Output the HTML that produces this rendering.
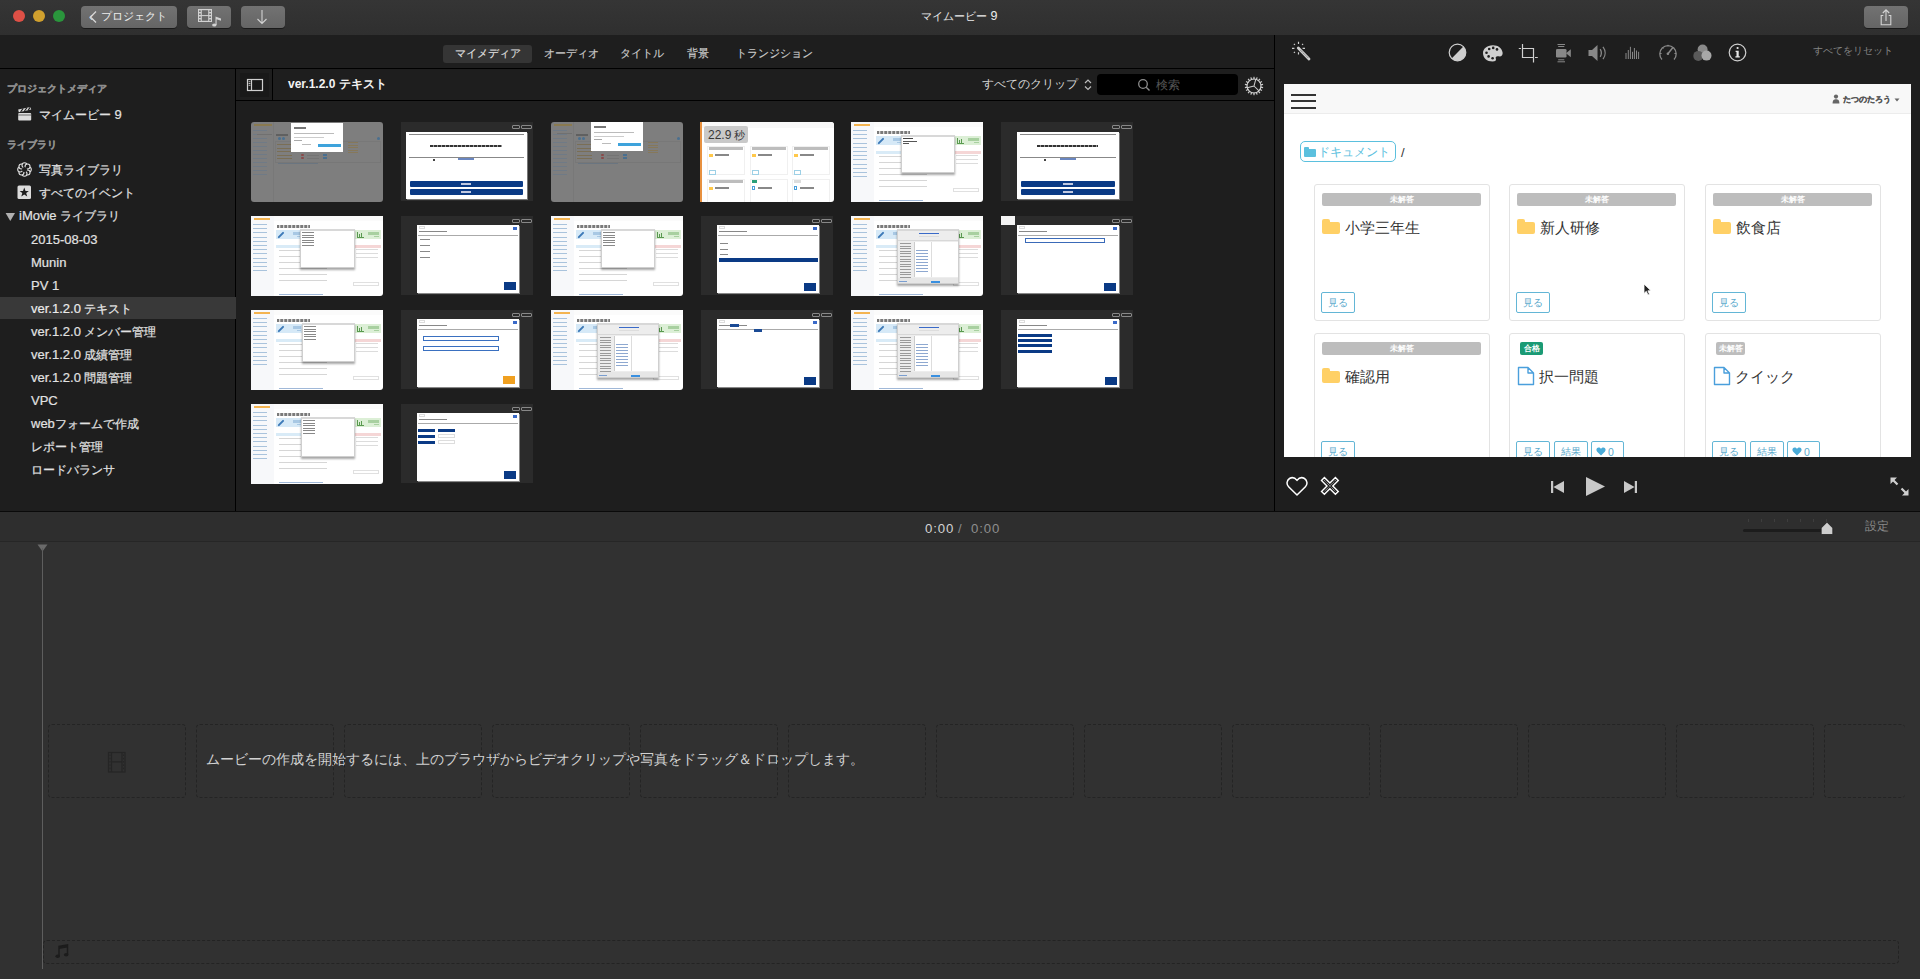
<!DOCTYPE html>
<html><head><meta charset="utf-8">
<style>
*{box-sizing:border-box;margin:0;padding:0}
html,body{width:1920px;height:979px;overflow:hidden;background:#1e1e1e;font-family:"Liberation Sans",sans-serif;}
.a{position:absolute}
.t{position:absolute;white-space:nowrap;line-height:1}
#titlebar{left:0;top:0;width:1920px;height:35px;background:linear-gradient(#353535,#2f2f2f)}
.tl{width:12px;height:12px;border-radius:50%;top:10px}
.btn{top:6px;height:22px;border-radius:4px;background:linear-gradient(#727272,#656565);box-shadow:0 1px 0 #1a1a1a}
.side{font-size:13px;color:#e2e2e2;-webkit-text-stroke:0.2px #e2e2e2}
.j{font-size:11.7px}
.tab{font-size:11px;color:#cbcbcb;top:48px;-webkit-text-stroke:0.15px #cbcbcb}
.thumb{width:132px;height:80px;overflow:hidden}
.card{background:#fff;border:1px solid #e4e4e4;border-radius:3px;width:176px}
.badge{background:#bbb;color:#fff;font-size:8px;font-weight:bold;text-align:center;line-height:13px;height:13px;border-radius:2px}
.vbtn{border:1px solid #5fb4d2;border-radius:2px;color:#5aa9cc;font-size:9px;text-align:center;line-height:20px;height:21px;background:#fff}
.dbox{border:1px dashed #434343;border-radius:3px;width:138px;height:74px;top:724px}
</style></head><body>
<!-- title bar -->
<div id="titlebar" class="a"></div>
<div class="a tl" style="left:13px;background:#de5046"></div>
<div class="a tl" style="left:33px;background:#d0a02e"></div>
<div class="a tl" style="left:53px;background:#2a953c"></div>
<div class="a btn" style="left:81px;width:96px"></div>
<div class="t" style="left:89px;top:10px;font-size:13px;color:#e6e6e6">&#x2039;</div>
<div class="t" style="left:101px;top:11px;font-size:11px;color:#ececec">プロジェクト</div>
<div class="a btn" style="left:187px;width:44px"></div>
<div class="a btn" style="left:241px;width:44px"></div>
<div class="t" style="left:921px;top:10px;font-size:11.2px;color:#ececec">マイムービー<span style="font-size:12.5px"> 9</span></div>
<div class="a btn" style="left:1864px;width:44px"></div>

<!-- tab row -->
<div class="a" style="left:443px;top:45px;width:89px;height:18px;border-radius:3px;background:#353535"></div>
<div class="t tab" style="left:455px;color:#e8e8e8">マイメディア</div>
<div class="t tab" style="left:544px">オーディオ</div>
<div class="t tab" style="left:620px">タイトル</div>
<div class="t tab" style="left:687px">背景</div>
<div class="t tab" style="left:736px">トランジション</div>
<div class="a" style="left:0;top:68px;width:1274px;height:1px;background:#000"></div>

<!-- sidebar -->
<div class="a" style="left:235px;top:69px;width:1px;height:442px;background:#000"></div>
<div class="t" style="left:7px;top:84px;font-size:10px;font-weight:bold;color:#8d8d8d;-webkit-text-stroke:0.3px #8d8d8d">プロジェクトメディア</div>
<div class="t side" style="left:39px;top:108px"><span class="j">マイムービー</span> 9</div>
<div class="t" style="left:7px;top:140px;font-size:10px;font-weight:bold;color:#8d8d8d;-webkit-text-stroke:0.3px #8d8d8d">ライブラリ</div>
<div class="t side" style="left:39px;top:163px"><span class="j">写真ライブラリ</span></div>
<div class="t side" style="left:39px;top:186px"><span class="j">すべてのイベント</span></div>
<div class="t side" style="left:19px;top:209px">iMovie <span class="j">ライブラリ</span></div>
<div class="a" style="left:0;top:297px;width:236px;height:22px;background:#393939"></div>
<div class="t side" style="left:31px;top:233px">2015-08-03</div>
<div class="t side" style="left:31px;top:256px">Munin</div>
<div class="t side" style="left:31px;top:279px">PV 1</div>
<div class="t side" style="left:31px;top:302px;color:#f0f0f0">ver.1.2.0 <span class="j">テキスト</span></div>
<div class="t side" style="left:31px;top:325px">ver.1.2.0 <span class="j">メンバー管理</span></div>
<div class="t side" style="left:31px;top:348px">ver.1.2.0 <span class="j">成績管理</span></div>
<div class="t side" style="left:31px;top:371px">ver.1.2.0 <span class="j">問題管理</span></div>
<div class="t side" style="left:31px;top:394px">VPC</div>
<div class="t side" style="left:31px;top:417px">web<span class="j">フォームで作成</span></div>
<div class="t side" style="left:31px;top:440px"><span class="j">レポート管理</span></div>
<div class="t side" style="left:31px;top:463px"><span class="j">ロードバランサ</span></div>

<!-- browser header -->
<div class="a" style="left:240px;top:73px;width:29px;height:24px;background:#191919"></div>
<div class="a" style="left:272px;top:69px;width:1px;height:31px;background:#000"></div>
<div class="a" style="left:236px;top:100px;width:1038px;height:1px;background:#000"></div>
<div class="t" style="left:288px;top:78px;font-size:12px;font-weight:bold;color:#f2f2f2">ver.1.2.0 テキスト</div>
<div class="t" style="left:982px;top:79px;font-size:11.8px;color:#d6d6d6">すべてのクリップ</div>
<div class="t" style="left:1813px;top:46px;font-size:10px;color:#858585">すべてをリセット</div>
<div class="a" style="left:1097px;top:74px;width:141px;height:21px;border-radius:4px;background:#000"></div>
<div class="t" style="left:1156px;top:79px;font-size:12px;color:#555">検索</div>
<div class="a" style="left:1274px;top:35px;width:1px;height:476px;background:#000"></div>

<!-- thumbs -->
<div class="a" style="left:251px;top:122px;width:132px;height:80px;background:#7e7e7e;border-radius:3px"></div><div class="a" style="left:273px;top:122px;width:1px;height:80px;background:#787878;"></div><div class="a" style="left:254px;top:124px;width:18px;height:2px;background:#8a7a50;"></div><div class="a" style="left:253px;top:130px;width:14px;height:1px;background:#6f7a86;"></div><div class="a" style="left:253px;top:134px;width:14px;height:1px;background:#6f7a86;"></div><div class="a" style="left:253px;top:138px;width:14px;height:1px;background:#6f7a86;"></div><div class="a" style="left:253px;top:142px;width:14px;height:1px;background:#6f7a86;"></div><div class="a" style="left:253px;top:146px;width:14px;height:1px;background:#6f7a86;"></div><div class="a" style="left:253px;top:150px;width:14px;height:1px;background:#6f7a86;"></div><div class="a" style="left:253px;top:154px;width:14px;height:1px;background:#6f7a86;"></div><div class="a" style="left:253px;top:158px;width:14px;height:1px;background:#6f7a86;"></div><div class="a" style="left:253px;top:162px;width:14px;height:1px;background:#6f7a86;"></div><div class="a" style="left:253px;top:166px;width:14px;height:1px;background:#6f7a86;"></div><div class="a" style="left:253px;top:170px;width:14px;height:1px;background:#6f7a86;"></div><div class="a" style="left:253px;top:174px;width:14px;height:1px;background:#6f7a86;"></div><div class="a" style="left:257px;top:134px;width:15px;height:1px;background:#707070;"></div><div class="a" style="left:276px;top:134px;width:12px;height:2px;background:#606060;"></div><div class="a" style="left:277px;top:144.0px;width:15px;height:1px;background:#7a6e55;"></div><div class="a" style="left:277px;top:147.5px;width:15px;height:1px;background:#7a6e55;"></div><div class="a" style="left:277px;top:151.0px;width:15px;height:1px;background:#7a6e55;"></div><div class="a" style="left:277px;top:154.5px;width:15px;height:1px;background:#7a6e55;"></div><div class="a" style="left:277px;top:158.0px;width:15px;height:1px;background:#7a6e55;"></div><div class="a" style="left:275px;top:141px;width:106px;height:22px;background:transparent;border:1px solid #787878"></div><div class="a" style="left:301px;top:154px;width:3px;height:2px;background:#8a4a4a;border-radius:1px"></div><div class="a" style="left:301px;top:157px;width:3px;height:2px;background:#8a4a4a;border-radius:1px"></div><div class="a" style="left:323px;top:154px;width:4px;height:2px;background:#4a7090;"></div><div class="a" style="left:323px;top:157px;width:4px;height:2px;background:#4a7090;"></div><div class="a" style="left:278px;top:137px;width:3px;height:3px;background:#4a7090;border-radius:50%"></div><div class="a" style="left:282px;top:137px;width:3px;height:3px;background:#4a7090;border-radius:50%"></div><div class="a" style="left:377px;top:137px;width:3px;height:3px;background:#4a7090;border-radius:50%"></div><div class="a" style="left:275px;top:162px;width:106px;height:1px;background:#777;"></div><div class="a" style="left:307px;top:155px;width:12px;height:1px;background:#747474;"></div><div class="a" style="left:307px;top:158px;width:12px;height:1px;background:#747474;"></div><div class="a" style="left:348px;top:142.0px;width:10px;height:1px;background:#86785a;"></div><div class="a" style="left:348px;top:144.5px;width:10px;height:1px;background:#86785a;"></div><div class="a" style="left:348px;top:147.0px;width:10px;height:1px;background:#86785a;"></div><div class="a" style="left:348px;top:149.5px;width:10px;height:1px;background:#86785a;"></div><div class="a" style="left:348px;top:152.0px;width:10px;height:1px;background:#86785a;"></div><div class="a" style="left:278px;top:163px;width:40px;height:1px;background:#6a7580;"></div><div class="a" style="left:291px;top:123px;width:52px;height:29px;background:#ffffff;"></div><div class="a" style="left:294px;top:127px;width:12px;height:2px;background:#777;"></div><div class="a" style="left:294px;top:133px;width:40px;height:1px;background:#bbb;"></div><div class="a" style="left:294px;top:137px;width:30px;height:1px;background:#ccc;"></div><div class="a" style="left:294px;top:140px;width:8px;height:1px;background:#aaa;"></div><div class="a" style="left:318px;top:144px;width:23px;height:3px;background:#3ea3dc;"></div><div class="a" style="left:302px;top:144px;width:9px;height:1px;background:#bbb;"></div>
<div class="a" style="left:401px;top:122px;width:132px;height:79px;background:#2b2b2b;"></div><div class="a" style="left:512px;top:125px;width:8px;height:4px;background:#2b2b2b;border:1px solid #888;border-radius:1px"></div><div class="a" style="left:521px;top:125px;width:11px;height:4px;background:#2b2b2b;border:1px solid #888;border-radius:1px"></div><div class="a" style="left:406px;top:132px;width:121px;height:67px;background:#fff;box-shadow:1px 1px 0 #777"></div><div class="a" style="left:409px;top:134px;width:115px;height:1px;background:#888;"></div><div class="a" style="left:430px;top:145px;width:72px;height:2px;background:#555;background:repeating-linear-gradient(90deg,#333 0 3px,#999 3px 4px)"></div><div class="a" style="left:409px;top:157px;width:115px;height:1px;background:#888;"></div><div class="a" style="left:458px;top:158px;width:16px;height:2px;background:#6a86c0;"></div><div class="a" style="left:433px;top:159px;width:2px;height:2px;background:#444;"></div><div class="a" style="left:410px;top:181px;width:113px;height:6px;background:#0a3a85;border-radius:1px"></div><div class="a" style="left:410px;top:189px;width:113px;height:6px;background:#0a3a85;border-radius:1px"></div><div class="a" style="left:461px;top:183px;width:10px;height:2px;background:#c0c8e0;"></div><div class="a" style="left:461px;top:191px;width:10px;height:2px;background:#c0c8e0;"></div>
<div class="a" style="left:551px;top:122px;width:132px;height:80px;background:#7e7e7e;border-radius:3px"></div><div class="a" style="left:573px;top:122px;width:1px;height:80px;background:#787878;"></div><div class="a" style="left:554px;top:124px;width:18px;height:2px;background:#8a7a50;"></div><div class="a" style="left:553px;top:130px;width:14px;height:1px;background:#6f7a86;"></div><div class="a" style="left:553px;top:134px;width:14px;height:1px;background:#6f7a86;"></div><div class="a" style="left:553px;top:138px;width:14px;height:1px;background:#6f7a86;"></div><div class="a" style="left:553px;top:142px;width:14px;height:1px;background:#6f7a86;"></div><div class="a" style="left:553px;top:146px;width:14px;height:1px;background:#6f7a86;"></div><div class="a" style="left:553px;top:150px;width:14px;height:1px;background:#6f7a86;"></div><div class="a" style="left:553px;top:154px;width:14px;height:1px;background:#6f7a86;"></div><div class="a" style="left:553px;top:158px;width:14px;height:1px;background:#6f7a86;"></div><div class="a" style="left:553px;top:162px;width:14px;height:1px;background:#6f7a86;"></div><div class="a" style="left:553px;top:166px;width:14px;height:1px;background:#6f7a86;"></div><div class="a" style="left:553px;top:170px;width:14px;height:1px;background:#6f7a86;"></div><div class="a" style="left:553px;top:174px;width:14px;height:1px;background:#6f7a86;"></div><div class="a" style="left:557px;top:133px;width:15px;height:1px;background:#707070;"></div><div class="a" style="left:576px;top:134px;width:12px;height:2px;background:#606060;"></div><div class="a" style="left:577px;top:144.0px;width:15px;height:1px;background:#7a6e55;"></div><div class="a" style="left:577px;top:147.5px;width:15px;height:1px;background:#7a6e55;"></div><div class="a" style="left:577px;top:151.0px;width:15px;height:1px;background:#7a6e55;"></div><div class="a" style="left:577px;top:154.5px;width:15px;height:1px;background:#7a6e55;"></div><div class="a" style="left:577px;top:158.0px;width:15px;height:1px;background:#7a6e55;"></div><div class="a" style="left:575px;top:141px;width:106px;height:22px;background:transparent;border:1px solid #787878"></div><div class="a" style="left:601px;top:154px;width:3px;height:2px;background:#8a4a4a;border-radius:1px"></div><div class="a" style="left:601px;top:157px;width:3px;height:2px;background:#8a4a4a;border-radius:1px"></div><div class="a" style="left:623px;top:154px;width:4px;height:2px;background:#4a7090;"></div><div class="a" style="left:623px;top:157px;width:4px;height:2px;background:#4a7090;"></div><div class="a" style="left:578px;top:137px;width:3px;height:3px;background:#4a7090;border-radius:50%"></div><div class="a" style="left:582px;top:137px;width:3px;height:3px;background:#4a7090;border-radius:50%"></div><div class="a" style="left:677px;top:137px;width:3px;height:3px;background:#4a7090;border-radius:50%"></div><div class="a" style="left:575px;top:162px;width:106px;height:1px;background:#777;"></div><div class="a" style="left:607px;top:155px;width:12px;height:1px;background:#747474;"></div><div class="a" style="left:607px;top:158px;width:12px;height:1px;background:#747474;"></div><div class="a" style="left:648px;top:142.0px;width:10px;height:1px;background:#86785a;"></div><div class="a" style="left:648px;top:144.5px;width:10px;height:1px;background:#86785a;"></div><div class="a" style="left:648px;top:147.0px;width:10px;height:1px;background:#86785a;"></div><div class="a" style="left:648px;top:149.5px;width:10px;height:1px;background:#86785a;"></div><div class="a" style="left:648px;top:152.0px;width:10px;height:1px;background:#86785a;"></div><div class="a" style="left:578px;top:163px;width:40px;height:1px;background:#6a7580;"></div><div class="a" style="left:591px;top:122px;width:52px;height:29px;background:#ffffff;"></div><div class="a" style="left:594px;top:126px;width:12px;height:2px;background:#777;"></div><div class="a" style="left:594px;top:132px;width:40px;height:1px;background:#bbb;"></div><div class="a" style="left:594px;top:136px;width:30px;height:1px;background:#ccc;"></div><div class="a" style="left:594px;top:139px;width:8px;height:1px;background:#aaa;"></div><div class="a" style="left:618px;top:143px;width:23px;height:3px;background:#3ea3dc;"></div><div class="a" style="left:602px;top:143px;width:9px;height:1px;background:#bbb;"></div>
<div class="a" style="left:700px;top:122px;width:134px;height:80px;overflow:hidden;border-radius:0 3px 3px 0"><div class="a" style="left:0px;top:0px;width:134px;height:80px;background:#fff;"></div><div class="a" style="left:0px;top:0px;width:2px;height:80px;background:#e8913f;"></div><div class="a" style="left:2px;top:0px;width:132px;height:6px;background:#f8f8f8;"></div><div class="a" style="left:4px;top:4px;width:44px;height:17px;background:#c9c9c9;border-radius:2px"></div><div class="t" style="left:8px;top:6.5px;font-size:12px;color:#383838">22.9<span style="font-size:10.5px"> 秒</span></div><div class="a" style="left:7px;top:24px;width:38px;height:29px;background:#fff;border:1px solid #f0f0f0"></div><div class="a" style="left:9px;top:25px;width:34px;height:3px;background:#bdbdbd;"></div><div class="a" style="left:9px;top:32px;width:4px;height:3px;background:#ffc84a;"></div><div class="a" style="left:15px;top:32px;width:14px;height:2px;background:#888;"></div><div class="a" style="left:9px;top:48px;width:7px;height:5px;background:#fff;border:1px solid #9dd0e6"></div><div class="a" style="left:50px;top:24px;width:38px;height:29px;background:#fff;border:1px solid #f0f0f0"></div><div class="a" style="left:52px;top:25px;width:34px;height:3px;background:#bdbdbd;"></div><div class="a" style="left:52px;top:32px;width:4px;height:3px;background:#ffc84a;"></div><div class="a" style="left:58px;top:32px;width:14px;height:2px;background:#888;"></div><div class="a" style="left:52px;top:48px;width:7px;height:5px;background:#fff;border:1px solid #9dd0e6"></div><div class="a" style="left:92px;top:24px;width:38px;height:29px;background:#fff;border:1px solid #f0f0f0"></div><div class="a" style="left:94px;top:25px;width:34px;height:3px;background:#bdbdbd;"></div><div class="a" style="left:94px;top:32px;width:4px;height:3px;background:#ffc84a;"></div><div class="a" style="left:100px;top:32px;width:14px;height:2px;background:#888;"></div><div class="a" style="left:94px;top:48px;width:7px;height:5px;background:#fff;border:1px solid #9dd0e6"></div><div class="a" style="left:7px;top:57px;width:38px;height:29px;background:#fff;border:1px solid #f0f0f0"></div><div class="a" style="left:9px;top:58px;width:34px;height:3px;background:#bdbdbd;"></div><div class="a" style="left:9px;top:65px;width:4px;height:3px;background:#ffc84a;"></div><div class="a" style="left:15px;top:65px;width:14px;height:2px;background:#888;"></div><div class="a" style="left:9px;top:81px;width:7px;height:5px;background:#fff;border:1px solid #9dd0e6"></div><div class="a" style="left:50px;top:57px;width:38px;height:29px;background:#fff;border:1px solid #f0f0f0"></div><div class="a" style="left:52px;top:58px;width:5px;height:3px;background:#2aa07a;"></div><div class="a" style="left:52px;top:64px;width:3px;height:4px;background:#fff;border:1px solid #4a9fdc"></div><div class="a" style="left:58px;top:65px;width:14px;height:2px;background:#888;"></div><div class="a" style="left:52px;top:81px;width:7px;height:5px;background:#fff;border:1px solid #9dd0e6"></div><div class="a" style="left:92px;top:57px;width:38px;height:29px;background:#fff;border:1px solid #f0f0f0"></div><div class="a" style="left:94px;top:58px;width:7px;height:3px;background:#ddd;"></div><div class="a" style="left:94px;top:64px;width:3px;height:4px;background:#fff;border:1px solid #4a9fdc"></div><div class="a" style="left:100px;top:65px;width:14px;height:2px;background:#888;"></div><div class="a" style="left:94px;top:81px;width:7px;height:5px;background:#fff;border:1px solid #9dd0e6"></div></div>
<div class="a" style="left:851px;top:122px;width:132px;height:80px;background:#fff;border-radius:3px"></div><div class="a" style="left:851px;top:122px;width:23px;height:80px;background:#f7f8fa;"></div><div class="a" style="left:874px;top:122px;width:109px;height:5px;background:#fbfbfb;"></div><div class="a" style="left:854px;top:124px;width:16px;height:2px;background:#f4b450;"></div><div class="a" style="left:853px;top:130.0px;width:14px;height:1px;background:#a9c3dc;"></div><div class="a" style="left:853px;top:134.2px;width:14px;height:1px;background:#a9c3dc;"></div><div class="a" style="left:853px;top:138.4px;width:14px;height:1px;background:#a9c3dc;"></div><div class="a" style="left:853px;top:142.6px;width:14px;height:1px;background:#a9c3dc;"></div><div class="a" style="left:853px;top:146.8px;width:14px;height:1px;background:#a9c3dc;"></div><div class="a" style="left:853px;top:151.0px;width:14px;height:1px;background:#a9c3dc;"></div><div class="a" style="left:853px;top:155.2px;width:14px;height:1px;background:#a9c3dc;"></div><div class="a" style="left:853px;top:159.4px;width:14px;height:1px;background:#a9c3dc;"></div><div class="a" style="left:853px;top:163.6px;width:14px;height:1px;background:#a9c3dc;"></div><div class="a" style="left:853px;top:167.8px;width:14px;height:1px;background:#a9c3dc;"></div><div class="a" style="left:853px;top:172.0px;width:14px;height:1px;background:#a9c3dc;"></div><div class="a" style="left:853px;top:176.2px;width:14px;height:1px;background:#a9c3dc;"></div><div class="a" style="left:877px;top:131px;width:33px;height:3px;background:#777;background:repeating-linear-gradient(90deg,#7a7a7a 0 2px,#d8d8d8 2px 3px,#999 3px 4px)"></div><div class="a" style="left:876px;top:136px;width:55px;height:9px;background:#d6e9f7;"></div><div class="a" style="left:877px;top:139.5px;width:8px;height:2.2px;background:#3d7ab8;transform:rotate(-45deg);border-radius:1px"></div><div class="a" style="left:893px;top:138px;width:8px;height:3px;background:#a8c8e4;"></div><div class="a" style="left:897px;top:142px;width:4px;height:1px;background:#a8c8e4;"></div><div class="a" style="left:955px;top:136px;width:26px;height:9px;background:#dcefd6;"></div><div class="a" style="left:957px;top:138px;width:1px;height:6px;background:#5a9a50;"></div><div class="a" style="left:959px;top:140px;width:1px;height:4px;background:#5a9a50;"></div><div class="a" style="left:961px;top:139px;width:1px;height:5px;background:#5a9a50;"></div><div class="a" style="left:957px;top:143px;width:7px;height:1px;background:#5a9a50;"></div><div class="a" style="left:968px;top:138px;width:11px;height:3px;background:#a8d0a0;"></div><div class="a" style="left:974px;top:142px;width:5px;height:1px;background:#a8d0a0;"></div><div class="a" style="left:876px;top:151px;width:55px;height:3px;background:#d9ebf7;"></div><div class="a" style="left:955px;top:151px;width:26px;height:3px;background:#f5d6d6;"></div><div class="a" style="left:879px;top:156px;width:48px;height:1px;background:#d6d6d6;"></div><div class="a" style="left:879px;top:162px;width:48px;height:1px;background:#d6d6d6;"></div><div class="a" style="left:879px;top:168px;width:48px;height:1px;background:#d6d6d6;"></div><div class="a" style="left:879px;top:174px;width:48px;height:1px;background:#d6d6d6;"></div><div class="a" style="left:879px;top:180px;width:48px;height:1px;background:#d6d6d6;"></div><div class="a" style="left:879px;top:186px;width:48px;height:1px;background:#d6d6d6;"></div><div class="a" style="left:956px;top:155px;width:22px;height:1px;background:#dcdcdc;"></div><div class="a" style="left:956px;top:159px;width:22px;height:1px;background:#dcdcdc;"></div><div class="a" style="left:956px;top:163px;width:22px;height:1px;background:#dcdcdc;"></div><div class="a" style="left:953px;top:188px;width:26px;height:4px;background:#fff;border:1px solid #e0e0e0"></div><div class="a" style="left:879px;top:200px;width:44px;height:1px;background:#a0b8d8;"></div><div class="a" style="left:901px;top:135px;width:54px;height:38px;background:#fff;border:1px solid #cfcfcf;border-top:2px solid #d8d8d8;box-shadow:0 2px 2px rgba(0,0,0,.35)"></div><div class="a" style="left:903px;top:138px;width:10px;height:1px;background:#444;"></div><div class="a" style="left:903px;top:141px;width:14px;height:1px;background:#555;"></div><div class="a" style="left:903px;top:143px;width:6px;height:1px;background:#555;"></div>
<div class="a" style="left:1001px;top:122px;width:132px;height:79px;background:#2b2b2b;"></div><div class="a" style="left:1112px;top:125px;width:8px;height:4px;background:#2b2b2b;border:1px solid #888;border-radius:1px"></div><div class="a" style="left:1121px;top:125px;width:11px;height:4px;background:#2b2b2b;border:1px solid #888;border-radius:1px"></div><div class="a" style="left:1017px;top:132px;width:102px;height:67px;background:#fff;box-shadow:1px 1px 0 #777"></div><div class="a" style="left:1020px;top:134px;width:96px;height:1px;background:#888;"></div><div class="a" style="left:1037px;top:145px;width:61px;height:2px;background:#555;background:repeating-linear-gradient(90deg,#333 0 3px,#999 3px 4px)"></div><div class="a" style="left:1020px;top:157px;width:96px;height:1px;background:#888;"></div><div class="a" style="left:1060px;top:158px;width:16px;height:2px;background:#6a86c0;"></div><div class="a" style="left:1044px;top:159px;width:2px;height:2px;background:#444;"></div><div class="a" style="left:1021px;top:181px;width:94px;height:6px;background:#0a3a85;border-radius:1px"></div><div class="a" style="left:1021px;top:189px;width:94px;height:6px;background:#0a3a85;border-radius:1px"></div><div class="a" style="left:1063px;top:183px;width:10px;height:2px;background:#c0c8e0;"></div><div class="a" style="left:1063px;top:191px;width:10px;height:2px;background:#c0c8e0;"></div>
<div class="a" style="left:251px;top:216px;width:132px;height:80px;background:#fff;border-radius:3px"></div><div class="a" style="left:251px;top:216px;width:23px;height:80px;background:#f7f8fa;"></div><div class="a" style="left:274px;top:216px;width:109px;height:5px;background:#fbfbfb;"></div><div class="a" style="left:254px;top:218px;width:16px;height:2px;background:#f4b450;"></div><div class="a" style="left:253px;top:224.0px;width:14px;height:1px;background:#a9c3dc;"></div><div class="a" style="left:253px;top:228.2px;width:14px;height:1px;background:#a9c3dc;"></div><div class="a" style="left:253px;top:232.4px;width:14px;height:1px;background:#a9c3dc;"></div><div class="a" style="left:253px;top:236.6px;width:14px;height:1px;background:#a9c3dc;"></div><div class="a" style="left:253px;top:240.8px;width:14px;height:1px;background:#a9c3dc;"></div><div class="a" style="left:253px;top:245.0px;width:14px;height:1px;background:#a9c3dc;"></div><div class="a" style="left:253px;top:249.2px;width:14px;height:1px;background:#a9c3dc;"></div><div class="a" style="left:253px;top:253.4px;width:14px;height:1px;background:#a9c3dc;"></div><div class="a" style="left:253px;top:257.6px;width:14px;height:1px;background:#a9c3dc;"></div><div class="a" style="left:253px;top:261.8px;width:14px;height:1px;background:#a9c3dc;"></div><div class="a" style="left:253px;top:266.0px;width:14px;height:1px;background:#a9c3dc;"></div><div class="a" style="left:253px;top:270.2px;width:14px;height:1px;background:#a9c3dc;"></div><div class="a" style="left:277px;top:225px;width:33px;height:3px;background:#777;background:repeating-linear-gradient(90deg,#7a7a7a 0 2px,#d8d8d8 2px 3px,#999 3px 4px)"></div><div class="a" style="left:276px;top:230px;width:55px;height:9px;background:#d6e9f7;"></div><div class="a" style="left:277px;top:233.5px;width:8px;height:2.2px;background:#3d7ab8;transform:rotate(-45deg);border-radius:1px"></div><div class="a" style="left:293px;top:232px;width:8px;height:3px;background:#a8c8e4;"></div><div class="a" style="left:297px;top:236px;width:4px;height:1px;background:#a8c8e4;"></div><div class="a" style="left:355px;top:230px;width:26px;height:9px;background:#dcefd6;"></div><div class="a" style="left:357px;top:232px;width:1px;height:6px;background:#5a9a50;"></div><div class="a" style="left:359px;top:234px;width:1px;height:4px;background:#5a9a50;"></div><div class="a" style="left:361px;top:233px;width:1px;height:5px;background:#5a9a50;"></div><div class="a" style="left:357px;top:237px;width:7px;height:1px;background:#5a9a50;"></div><div class="a" style="left:368px;top:232px;width:11px;height:3px;background:#a8d0a0;"></div><div class="a" style="left:374px;top:236px;width:5px;height:1px;background:#a8d0a0;"></div><div class="a" style="left:276px;top:245px;width:55px;height:3px;background:#d9ebf7;"></div><div class="a" style="left:355px;top:245px;width:26px;height:3px;background:#f5d6d6;"></div><div class="a" style="left:279px;top:250px;width:48px;height:1px;background:#d6d6d6;"></div><div class="a" style="left:279px;top:256px;width:48px;height:1px;background:#d6d6d6;"></div><div class="a" style="left:279px;top:262px;width:48px;height:1px;background:#d6d6d6;"></div><div class="a" style="left:279px;top:268px;width:48px;height:1px;background:#d6d6d6;"></div><div class="a" style="left:279px;top:274px;width:48px;height:1px;background:#d6d6d6;"></div><div class="a" style="left:279px;top:280px;width:48px;height:1px;background:#d6d6d6;"></div><div class="a" style="left:356px;top:249px;width:22px;height:1px;background:#dcdcdc;"></div><div class="a" style="left:356px;top:253px;width:22px;height:1px;background:#dcdcdc;"></div><div class="a" style="left:356px;top:257px;width:22px;height:1px;background:#dcdcdc;"></div><div class="a" style="left:353px;top:282px;width:26px;height:4px;background:#fff;border:1px solid #e0e0e0"></div><div class="a" style="left:279px;top:294px;width:44px;height:1px;background:#a0b8d8;"></div><div class="a" style="left:300px;top:229px;width:55px;height:39px;background:#fff;border:1px solid #cfcfcf;border-top:2px solid #d8d8d8;box-shadow:0 2px 2px rgba(0,0,0,.35)"></div><div class="a" style="left:302px;top:232.0px;width:12px;height:1px;background:#888;"></div><div class="a" style="left:302px;top:234.5px;width:12px;height:1px;background:#888;"></div><div class="a" style="left:302px;top:237.0px;width:12px;height:1px;background:#888;"></div><div class="a" style="left:302px;top:239.5px;width:12px;height:1px;background:#888;"></div><div class="a" style="left:302px;top:242.0px;width:12px;height:1px;background:#888;"></div><div class="a" style="left:302px;top:244.5px;width:12px;height:1px;background:#888;"></div>
<div class="a" style="left:401px;top:216px;width:132px;height:79px;background:#2b2b2b;"></div><div class="a" style="left:512px;top:219px;width:8px;height:4px;background:#2b2b2b;border:1px solid #888;border-radius:1px"></div><div class="a" style="left:521px;top:219px;width:11px;height:4px;background:#2b2b2b;border:1px solid #888;border-radius:1px"></div><div class="a" style="left:417px;top:225px;width:102px;height:68px;background:#fff;box-shadow:1px 1px 0 #888"></div><div class="a" style="left:419px;top:226px;width:6px;height:3px;background:#fff;border:1px solid #ddd"></div><div class="a" style="left:513px;top:227px;width:4px;height:3px;background:#3a6ac8;"></div><div class="a" style="left:419px;top:231px;width:28px;height:1px;background:#888;"></div><div class="a" style="left:418px;top:235px;width:100px;height:1px;background:#aaa;"></div><div class="a" style="left:420px;top:239px;width:10px;height:1px;background:#888;"></div><div class="a" style="left:420px;top:245px;width:10px;height:1px;background:#888;"></div><div class="a" style="left:420px;top:251px;width:10px;height:1px;background:#888;"></div><div class="a" style="left:420px;top:257px;width:10px;height:1px;background:#888;"></div><div class="a" style="left:504px;top:282px;width:12px;height:8px;background:#0a3a85;"></div>
<div class="a" style="left:551px;top:216px;width:132px;height:80px;background:#fff;border-radius:3px"></div><div class="a" style="left:551px;top:216px;width:23px;height:80px;background:#f7f8fa;"></div><div class="a" style="left:574px;top:216px;width:109px;height:5px;background:#fbfbfb;"></div><div class="a" style="left:554px;top:218px;width:16px;height:2px;background:#f4b450;"></div><div class="a" style="left:553px;top:224.0px;width:14px;height:1px;background:#a9c3dc;"></div><div class="a" style="left:553px;top:228.2px;width:14px;height:1px;background:#a9c3dc;"></div><div class="a" style="left:553px;top:232.4px;width:14px;height:1px;background:#a9c3dc;"></div><div class="a" style="left:553px;top:236.6px;width:14px;height:1px;background:#a9c3dc;"></div><div class="a" style="left:553px;top:240.8px;width:14px;height:1px;background:#a9c3dc;"></div><div class="a" style="left:553px;top:245.0px;width:14px;height:1px;background:#a9c3dc;"></div><div class="a" style="left:553px;top:249.2px;width:14px;height:1px;background:#a9c3dc;"></div><div class="a" style="left:553px;top:253.4px;width:14px;height:1px;background:#a9c3dc;"></div><div class="a" style="left:553px;top:257.6px;width:14px;height:1px;background:#a9c3dc;"></div><div class="a" style="left:553px;top:261.8px;width:14px;height:1px;background:#a9c3dc;"></div><div class="a" style="left:553px;top:266.0px;width:14px;height:1px;background:#a9c3dc;"></div><div class="a" style="left:553px;top:270.2px;width:14px;height:1px;background:#a9c3dc;"></div><div class="a" style="left:577px;top:225px;width:33px;height:3px;background:#777;background:repeating-linear-gradient(90deg,#7a7a7a 0 2px,#d8d8d8 2px 3px,#999 3px 4px)"></div><div class="a" style="left:576px;top:230px;width:55px;height:9px;background:#d6e9f7;"></div><div class="a" style="left:577px;top:233.5px;width:8px;height:2.2px;background:#3d7ab8;transform:rotate(-45deg);border-radius:1px"></div><div class="a" style="left:593px;top:232px;width:8px;height:3px;background:#a8c8e4;"></div><div class="a" style="left:597px;top:236px;width:4px;height:1px;background:#a8c8e4;"></div><div class="a" style="left:655px;top:230px;width:26px;height:9px;background:#dcefd6;"></div><div class="a" style="left:657px;top:232px;width:1px;height:6px;background:#5a9a50;"></div><div class="a" style="left:659px;top:234px;width:1px;height:4px;background:#5a9a50;"></div><div class="a" style="left:661px;top:233px;width:1px;height:5px;background:#5a9a50;"></div><div class="a" style="left:657px;top:237px;width:7px;height:1px;background:#5a9a50;"></div><div class="a" style="left:668px;top:232px;width:11px;height:3px;background:#a8d0a0;"></div><div class="a" style="left:674px;top:236px;width:5px;height:1px;background:#a8d0a0;"></div><div class="a" style="left:576px;top:245px;width:55px;height:3px;background:#d9ebf7;"></div><div class="a" style="left:655px;top:245px;width:26px;height:3px;background:#f5d6d6;"></div><div class="a" style="left:579px;top:250px;width:48px;height:1px;background:#d6d6d6;"></div><div class="a" style="left:579px;top:256px;width:48px;height:1px;background:#d6d6d6;"></div><div class="a" style="left:579px;top:262px;width:48px;height:1px;background:#d6d6d6;"></div><div class="a" style="left:579px;top:268px;width:48px;height:1px;background:#d6d6d6;"></div><div class="a" style="left:579px;top:274px;width:48px;height:1px;background:#d6d6d6;"></div><div class="a" style="left:579px;top:280px;width:48px;height:1px;background:#d6d6d6;"></div><div class="a" style="left:656px;top:249px;width:22px;height:1px;background:#dcdcdc;"></div><div class="a" style="left:656px;top:253px;width:22px;height:1px;background:#dcdcdc;"></div><div class="a" style="left:656px;top:257px;width:22px;height:1px;background:#dcdcdc;"></div><div class="a" style="left:653px;top:282px;width:26px;height:4px;background:#fff;border:1px solid #e0e0e0"></div><div class="a" style="left:579px;top:294px;width:44px;height:1px;background:#a0b8d8;"></div><div class="a" style="left:601px;top:229px;width:54px;height:39px;background:#fff;border:1px solid #cfcfcf;border-top:2px solid #d8d8d8;box-shadow:0 2px 2px rgba(0,0,0,.35)"></div><div class="a" style="left:603px;top:232.0px;width:12px;height:1px;background:#888;"></div><div class="a" style="left:603px;top:234.5px;width:12px;height:1px;background:#888;"></div><div class="a" style="left:603px;top:237.0px;width:12px;height:1px;background:#888;"></div><div class="a" style="left:603px;top:239.5px;width:12px;height:1px;background:#888;"></div><div class="a" style="left:603px;top:242.0px;width:12px;height:1px;background:#888;"></div><div class="a" style="left:603px;top:244.5px;width:12px;height:1px;background:#888;"></div>
<div class="a" style="left:701px;top:216px;width:132px;height:79px;background:#2b2b2b;"></div><div class="a" style="left:812px;top:219px;width:8px;height:4px;background:#2b2b2b;border:1px solid #888;border-radius:1px"></div><div class="a" style="left:821px;top:219px;width:11px;height:4px;background:#2b2b2b;border:1px solid #888;border-radius:1px"></div><div class="a" style="left:717px;top:225px;width:102px;height:68px;background:#fff;box-shadow:1px 1px 0 #888"></div><div class="a" style="left:719px;top:226px;width:6px;height:3px;background:#fff;border:1px solid #ddd"></div><div class="a" style="left:813px;top:227px;width:4px;height:3px;background:#3a6ac8;"></div><div class="a" style="left:719px;top:231px;width:28px;height:1px;background:#888;"></div><div class="a" style="left:718px;top:235px;width:100px;height:1px;background:#aaa;"></div><div class="a" style="left:720px;top:243.0px;width:8px;height:1px;background:#888;"></div><div class="a" style="left:720px;top:248.5px;width:8px;height:1px;background:#888;"></div><div class="a" style="left:720px;top:254.0px;width:8px;height:1px;background:#888;"></div><div class="a" style="left:719px;top:258px;width:99px;height:4px;background:#0a3a85;"></div><div class="a" style="left:804px;top:283px;width:12px;height:8px;background:#0a3a85;"></div>
<div class="a" style="left:851px;top:216px;width:132px;height:80px;background:#fff;border-radius:3px"></div><div class="a" style="left:851px;top:216px;width:23px;height:80px;background:#f7f8fa;"></div><div class="a" style="left:874px;top:216px;width:109px;height:5px;background:#fbfbfb;"></div><div class="a" style="left:854px;top:218px;width:16px;height:2px;background:#f4b450;"></div><div class="a" style="left:853px;top:224.0px;width:14px;height:1px;background:#a9c3dc;"></div><div class="a" style="left:853px;top:228.2px;width:14px;height:1px;background:#a9c3dc;"></div><div class="a" style="left:853px;top:232.4px;width:14px;height:1px;background:#a9c3dc;"></div><div class="a" style="left:853px;top:236.6px;width:14px;height:1px;background:#a9c3dc;"></div><div class="a" style="left:853px;top:240.8px;width:14px;height:1px;background:#a9c3dc;"></div><div class="a" style="left:853px;top:245.0px;width:14px;height:1px;background:#a9c3dc;"></div><div class="a" style="left:853px;top:249.2px;width:14px;height:1px;background:#a9c3dc;"></div><div class="a" style="left:853px;top:253.4px;width:14px;height:1px;background:#a9c3dc;"></div><div class="a" style="left:853px;top:257.6px;width:14px;height:1px;background:#a9c3dc;"></div><div class="a" style="left:853px;top:261.8px;width:14px;height:1px;background:#a9c3dc;"></div><div class="a" style="left:853px;top:266.0px;width:14px;height:1px;background:#a9c3dc;"></div><div class="a" style="left:853px;top:270.2px;width:14px;height:1px;background:#a9c3dc;"></div><div class="a" style="left:877px;top:225px;width:33px;height:3px;background:#777;background:repeating-linear-gradient(90deg,#7a7a7a 0 2px,#d8d8d8 2px 3px,#999 3px 4px)"></div><div class="a" style="left:876px;top:230px;width:55px;height:9px;background:#d6e9f7;"></div><div class="a" style="left:877px;top:233.5px;width:8px;height:2.2px;background:#3d7ab8;transform:rotate(-45deg);border-radius:1px"></div><div class="a" style="left:893px;top:232px;width:8px;height:3px;background:#a8c8e4;"></div><div class="a" style="left:897px;top:236px;width:4px;height:1px;background:#a8c8e4;"></div><div class="a" style="left:955px;top:230px;width:26px;height:9px;background:#dcefd6;"></div><div class="a" style="left:957px;top:232px;width:1px;height:6px;background:#5a9a50;"></div><div class="a" style="left:959px;top:234px;width:1px;height:4px;background:#5a9a50;"></div><div class="a" style="left:961px;top:233px;width:1px;height:5px;background:#5a9a50;"></div><div class="a" style="left:957px;top:237px;width:7px;height:1px;background:#5a9a50;"></div><div class="a" style="left:968px;top:232px;width:11px;height:3px;background:#a8d0a0;"></div><div class="a" style="left:974px;top:236px;width:5px;height:1px;background:#a8d0a0;"></div><div class="a" style="left:876px;top:245px;width:55px;height:3px;background:#d9ebf7;"></div><div class="a" style="left:955px;top:245px;width:26px;height:3px;background:#f5d6d6;"></div><div class="a" style="left:879px;top:250px;width:48px;height:1px;background:#d6d6d6;"></div><div class="a" style="left:879px;top:256px;width:48px;height:1px;background:#d6d6d6;"></div><div class="a" style="left:879px;top:262px;width:48px;height:1px;background:#d6d6d6;"></div><div class="a" style="left:879px;top:268px;width:48px;height:1px;background:#d6d6d6;"></div><div class="a" style="left:879px;top:274px;width:48px;height:1px;background:#d6d6d6;"></div><div class="a" style="left:879px;top:280px;width:48px;height:1px;background:#d6d6d6;"></div><div class="a" style="left:956px;top:249px;width:22px;height:1px;background:#dcdcdc;"></div><div class="a" style="left:956px;top:253px;width:22px;height:1px;background:#dcdcdc;"></div><div class="a" style="left:956px;top:257px;width:22px;height:1px;background:#dcdcdc;"></div><div class="a" style="left:953px;top:282px;width:26px;height:4px;background:#fff;border:1px solid #e0e0e0"></div><div class="a" style="left:879px;top:294px;width:44px;height:1px;background:#a0b8d8;"></div><div class="a" style="left:897px;top:229px;width:62px;height:55px;background:#fff;border:1px solid #cfcfcf;border-top:2px solid #d8d8d8;box-shadow:0 2px 2px rgba(0,0,0,.35)"></div><div class="a" style="left:898px;top:231px;width:60px;height:52px;background:#ededed;"></div><div class="a" style="left:919px;top:233px;width:20px;height:1px;background:#3a6ac8;"></div><div class="a" style="left:919px;top:236px;width:20px;height:1px;background:#ddd;"></div><div class="a" style="left:898px;top:240px;width:60px;height:1px;background:#d8d8d8;"></div><div class="a" style="left:914px;top:242px;width:44px;height:35px;background:#fff;"></div><div class="a" style="left:900px;top:243.0px;width:11px;height:1px;background:#9a9a9a;"></div><div class="a" style="left:900px;top:245.6px;width:11px;height:1px;background:#9a9a9a;"></div><div class="a" style="left:900px;top:248.2px;width:11px;height:1px;background:#9a9a9a;"></div><div class="a" style="left:900px;top:250.8px;width:11px;height:1px;background:#9a9a9a;"></div><div class="a" style="left:900px;top:253.4px;width:11px;height:1px;background:#9a9a9a;"></div><div class="a" style="left:900px;top:256.0px;width:11px;height:1px;background:#9a9a9a;"></div><div class="a" style="left:900px;top:258.6px;width:11px;height:1px;background:#9a9a9a;"></div><div class="a" style="left:900px;top:261.2px;width:11px;height:1px;background:#9a9a9a;"></div><div class="a" style="left:900px;top:263.8px;width:11px;height:1px;background:#9a9a9a;"></div><div class="a" style="left:900px;top:266.4px;width:11px;height:1px;background:#9a9a9a;"></div><div class="a" style="left:900px;top:269.0px;width:11px;height:1px;background:#9a9a9a;"></div><div class="a" style="left:900px;top:271.6px;width:11px;height:1px;background:#9a9a9a;"></div><div class="a" style="left:900px;top:274.2px;width:11px;height:1px;background:#9a9a9a;"></div><div class="a" style="left:900px;top:276.8px;width:11px;height:1px;background:#9a9a9a;"></div><div class="a" style="left:914px;top:242px;width:1px;height:35px;background:#ccc;"></div><div class="a" style="left:931px;top:242px;width:1px;height:35px;background:#ddd;"></div><div class="a" style="left:916px;top:250px;width:12px;height:1px;background:#8ea8d0;"></div><div class="a" style="left:916px;top:253px;width:12px;height:1px;background:#8ea8d0;"></div><div class="a" style="left:916px;top:256px;width:12px;height:1px;background:#8ea8d0;"></div><div class="a" style="left:916px;top:259px;width:12px;height:1px;background:#8ea8d0;"></div><div class="a" style="left:916px;top:262px;width:12px;height:1px;background:#8ea8d0;"></div><div class="a" style="left:916px;top:265px;width:12px;height:1px;background:#8ea8d0;"></div><div class="a" style="left:916px;top:268px;width:12px;height:1px;background:#8ea8d0;"></div><div class="a" style="left:916px;top:271px;width:12px;height:1px;background:#8ea8d0;"></div><div class="a" style="left:898px;top:278px;width:60px;height:5px;background:#e6e6e6;"></div><div class="a" style="left:931px;top:281px;width:9px;height:2px;background:#3a90e0;"></div><div class="a" style="left:899px;top:281px;width:8px;height:1px;background:#7a9ed0;"></div>
<div class="a" style="left:1001px;top:216px;width:132px;height:79px;background:#2b2b2b;"></div><div class="a" style="left:1112px;top:219px;width:8px;height:4px;background:#2b2b2b;border:1px solid #888;border-radius:1px"></div><div class="a" style="left:1121px;top:219px;width:11px;height:4px;background:#2b2b2b;border:1px solid #888;border-radius:1px"></div><div class="a" style="left:1017px;top:225px;width:102px;height:68px;background:#fff;box-shadow:1px 1px 0 #888"></div><div class="a" style="left:1019px;top:226px;width:6px;height:3px;background:#fff;border:1px solid #ddd"></div><div class="a" style="left:1113px;top:227px;width:4px;height:3px;background:#3a6ac8;"></div><div class="a" style="left:1019px;top:231px;width:28px;height:1px;background:#888;"></div><div class="a" style="left:1018px;top:235px;width:100px;height:1px;background:#aaa;"></div><div class="a" style="left:1025px;top:238px;width:80px;height:5px;background:#fff;border:1px solid #3a6ab8"></div><div class="a" style="left:1104px;top:283px;width:12px;height:8px;background:#0a3a85;"></div><div class="a" style="left:1001px;top:216px;width:14px;height:9px;background:#f4f4f4;"></div>
<div class="a" style="left:251px;top:310px;width:132px;height:80px;background:#fff;border-radius:3px"></div><div class="a" style="left:251px;top:310px;width:23px;height:80px;background:#f7f8fa;"></div><div class="a" style="left:274px;top:310px;width:109px;height:5px;background:#fbfbfb;"></div><div class="a" style="left:254px;top:312px;width:16px;height:2px;background:#f4b450;"></div><div class="a" style="left:253px;top:318.0px;width:14px;height:1px;background:#a9c3dc;"></div><div class="a" style="left:253px;top:322.2px;width:14px;height:1px;background:#a9c3dc;"></div><div class="a" style="left:253px;top:326.4px;width:14px;height:1px;background:#a9c3dc;"></div><div class="a" style="left:253px;top:330.6px;width:14px;height:1px;background:#a9c3dc;"></div><div class="a" style="left:253px;top:334.8px;width:14px;height:1px;background:#a9c3dc;"></div><div class="a" style="left:253px;top:339.0px;width:14px;height:1px;background:#a9c3dc;"></div><div class="a" style="left:253px;top:343.2px;width:14px;height:1px;background:#a9c3dc;"></div><div class="a" style="left:253px;top:347.4px;width:14px;height:1px;background:#a9c3dc;"></div><div class="a" style="left:253px;top:351.6px;width:14px;height:1px;background:#a9c3dc;"></div><div class="a" style="left:253px;top:355.8px;width:14px;height:1px;background:#a9c3dc;"></div><div class="a" style="left:253px;top:360.0px;width:14px;height:1px;background:#a9c3dc;"></div><div class="a" style="left:253px;top:364.2px;width:14px;height:1px;background:#a9c3dc;"></div><div class="a" style="left:277px;top:319px;width:33px;height:3px;background:#777;background:repeating-linear-gradient(90deg,#7a7a7a 0 2px,#d8d8d8 2px 3px,#999 3px 4px)"></div><div class="a" style="left:276px;top:324px;width:55px;height:9px;background:#d6e9f7;"></div><div class="a" style="left:277px;top:327.5px;width:8px;height:2.2px;background:#3d7ab8;transform:rotate(-45deg);border-radius:1px"></div><div class="a" style="left:293px;top:326px;width:8px;height:3px;background:#a8c8e4;"></div><div class="a" style="left:297px;top:330px;width:4px;height:1px;background:#a8c8e4;"></div><div class="a" style="left:355px;top:324px;width:26px;height:9px;background:#dcefd6;"></div><div class="a" style="left:357px;top:326px;width:1px;height:6px;background:#5a9a50;"></div><div class="a" style="left:359px;top:328px;width:1px;height:4px;background:#5a9a50;"></div><div class="a" style="left:361px;top:327px;width:1px;height:5px;background:#5a9a50;"></div><div class="a" style="left:357px;top:331px;width:7px;height:1px;background:#5a9a50;"></div><div class="a" style="left:368px;top:326px;width:11px;height:3px;background:#a8d0a0;"></div><div class="a" style="left:374px;top:330px;width:5px;height:1px;background:#a8d0a0;"></div><div class="a" style="left:276px;top:339px;width:55px;height:3px;background:#d9ebf7;"></div><div class="a" style="left:355px;top:339px;width:26px;height:3px;background:#f5d6d6;"></div><div class="a" style="left:279px;top:344px;width:48px;height:1px;background:#d6d6d6;"></div><div class="a" style="left:279px;top:350px;width:48px;height:1px;background:#d6d6d6;"></div><div class="a" style="left:279px;top:356px;width:48px;height:1px;background:#d6d6d6;"></div><div class="a" style="left:279px;top:362px;width:48px;height:1px;background:#d6d6d6;"></div><div class="a" style="left:279px;top:368px;width:48px;height:1px;background:#d6d6d6;"></div><div class="a" style="left:279px;top:374px;width:48px;height:1px;background:#d6d6d6;"></div><div class="a" style="left:356px;top:343px;width:22px;height:1px;background:#dcdcdc;"></div><div class="a" style="left:356px;top:347px;width:22px;height:1px;background:#dcdcdc;"></div><div class="a" style="left:356px;top:351px;width:22px;height:1px;background:#dcdcdc;"></div><div class="a" style="left:353px;top:376px;width:26px;height:4px;background:#fff;border:1px solid #e0e0e0"></div><div class="a" style="left:279px;top:388px;width:44px;height:1px;background:#a0b8d8;"></div><div class="a" style="left:302px;top:323px;width:53px;height:39px;background:#fff;border:1px solid #cfcfcf;border-top:2px solid #d8d8d8;box-shadow:0 2px 2px rgba(0,0,0,.35)"></div><div class="a" style="left:304px;top:326.0px;width:12px;height:1px;background:#888;"></div><div class="a" style="left:304px;top:328.5px;width:12px;height:1px;background:#888;"></div><div class="a" style="left:304px;top:331.0px;width:12px;height:1px;background:#888;"></div><div class="a" style="left:304px;top:333.5px;width:12px;height:1px;background:#888;"></div><div class="a" style="left:304px;top:336.0px;width:12px;height:1px;background:#888;"></div><div class="a" style="left:304px;top:338.5px;width:12px;height:1px;background:#888;"></div>
<div class="a" style="left:401px;top:310px;width:132px;height:79px;background:#2b2b2b;"></div><div class="a" style="left:512px;top:313px;width:8px;height:4px;background:#2b2b2b;border:1px solid #888;border-radius:1px"></div><div class="a" style="left:521px;top:313px;width:11px;height:4px;background:#2b2b2b;border:1px solid #888;border-radius:1px"></div><div class="a" style="left:417px;top:319px;width:102px;height:68px;background:#fff;box-shadow:1px 1px 0 #888"></div><div class="a" style="left:419px;top:320px;width:6px;height:3px;background:#fff;border:1px solid #ddd"></div><div class="a" style="left:513px;top:321px;width:4px;height:3px;background:#3a6ac8;"></div><div class="a" style="left:419px;top:325px;width:28px;height:1px;background:#888;"></div><div class="a" style="left:418px;top:329px;width:100px;height:1px;background:#aaa;"></div><div class="a" style="left:423px;top:336px;width:76px;height:5px;background:#fff;border:1px solid #3a70c0"></div><div class="a" style="left:423px;top:346px;width:76px;height:5px;background:#fff;border:1px solid #3a70c0"></div><div class="a" style="left:503px;top:376px;width:12px;height:8px;background:#f0a020;"></div>
<div class="a" style="left:551px;top:310px;width:132px;height:80px;background:#fff;border-radius:3px"></div><div class="a" style="left:551px;top:310px;width:23px;height:80px;background:#f7f8fa;"></div><div class="a" style="left:574px;top:310px;width:109px;height:5px;background:#fbfbfb;"></div><div class="a" style="left:554px;top:312px;width:16px;height:2px;background:#f4b450;"></div><div class="a" style="left:553px;top:318.0px;width:14px;height:1px;background:#a9c3dc;"></div><div class="a" style="left:553px;top:322.2px;width:14px;height:1px;background:#a9c3dc;"></div><div class="a" style="left:553px;top:326.4px;width:14px;height:1px;background:#a9c3dc;"></div><div class="a" style="left:553px;top:330.6px;width:14px;height:1px;background:#a9c3dc;"></div><div class="a" style="left:553px;top:334.8px;width:14px;height:1px;background:#a9c3dc;"></div><div class="a" style="left:553px;top:339.0px;width:14px;height:1px;background:#a9c3dc;"></div><div class="a" style="left:553px;top:343.2px;width:14px;height:1px;background:#a9c3dc;"></div><div class="a" style="left:553px;top:347.4px;width:14px;height:1px;background:#a9c3dc;"></div><div class="a" style="left:553px;top:351.6px;width:14px;height:1px;background:#a9c3dc;"></div><div class="a" style="left:553px;top:355.8px;width:14px;height:1px;background:#a9c3dc;"></div><div class="a" style="left:553px;top:360.0px;width:14px;height:1px;background:#a9c3dc;"></div><div class="a" style="left:553px;top:364.2px;width:14px;height:1px;background:#a9c3dc;"></div><div class="a" style="left:577px;top:319px;width:33px;height:3px;background:#777;background:repeating-linear-gradient(90deg,#7a7a7a 0 2px,#d8d8d8 2px 3px,#999 3px 4px)"></div><div class="a" style="left:576px;top:324px;width:55px;height:9px;background:#d6e9f7;"></div><div class="a" style="left:577px;top:327.5px;width:8px;height:2.2px;background:#3d7ab8;transform:rotate(-45deg);border-radius:1px"></div><div class="a" style="left:593px;top:326px;width:8px;height:3px;background:#a8c8e4;"></div><div class="a" style="left:597px;top:330px;width:4px;height:1px;background:#a8c8e4;"></div><div class="a" style="left:655px;top:324px;width:26px;height:9px;background:#dcefd6;"></div><div class="a" style="left:657px;top:326px;width:1px;height:6px;background:#5a9a50;"></div><div class="a" style="left:659px;top:328px;width:1px;height:4px;background:#5a9a50;"></div><div class="a" style="left:661px;top:327px;width:1px;height:5px;background:#5a9a50;"></div><div class="a" style="left:657px;top:331px;width:7px;height:1px;background:#5a9a50;"></div><div class="a" style="left:668px;top:326px;width:11px;height:3px;background:#a8d0a0;"></div><div class="a" style="left:674px;top:330px;width:5px;height:1px;background:#a8d0a0;"></div><div class="a" style="left:576px;top:339px;width:55px;height:3px;background:#d9ebf7;"></div><div class="a" style="left:655px;top:339px;width:26px;height:3px;background:#f5d6d6;"></div><div class="a" style="left:579px;top:344px;width:48px;height:1px;background:#d6d6d6;"></div><div class="a" style="left:579px;top:350px;width:48px;height:1px;background:#d6d6d6;"></div><div class="a" style="left:579px;top:356px;width:48px;height:1px;background:#d6d6d6;"></div><div class="a" style="left:579px;top:362px;width:48px;height:1px;background:#d6d6d6;"></div><div class="a" style="left:579px;top:368px;width:48px;height:1px;background:#d6d6d6;"></div><div class="a" style="left:579px;top:374px;width:48px;height:1px;background:#d6d6d6;"></div><div class="a" style="left:656px;top:343px;width:22px;height:1px;background:#dcdcdc;"></div><div class="a" style="left:656px;top:347px;width:22px;height:1px;background:#dcdcdc;"></div><div class="a" style="left:656px;top:351px;width:22px;height:1px;background:#dcdcdc;"></div><div class="a" style="left:653px;top:376px;width:26px;height:4px;background:#fff;border:1px solid #e0e0e0"></div><div class="a" style="left:579px;top:388px;width:44px;height:1px;background:#a0b8d8;"></div><div class="a" style="left:597px;top:323px;width:62px;height:55px;background:#fff;border:1px solid #cfcfcf;border-top:2px solid #d8d8d8;box-shadow:0 2px 2px rgba(0,0,0,.35)"></div><div class="a" style="left:598px;top:325px;width:60px;height:52px;background:#ededed;"></div><div class="a" style="left:619px;top:327px;width:20px;height:1px;background:#3a6ac8;"></div><div class="a" style="left:619px;top:330px;width:20px;height:1px;background:#ddd;"></div><div class="a" style="left:598px;top:334px;width:60px;height:1px;background:#d8d8d8;"></div><div class="a" style="left:614px;top:336px;width:44px;height:35px;background:#fff;"></div><div class="a" style="left:600px;top:337.0px;width:11px;height:1px;background:#9a9a9a;"></div><div class="a" style="left:600px;top:339.6px;width:11px;height:1px;background:#9a9a9a;"></div><div class="a" style="left:600px;top:342.2px;width:11px;height:1px;background:#9a9a9a;"></div><div class="a" style="left:600px;top:344.8px;width:11px;height:1px;background:#9a9a9a;"></div><div class="a" style="left:600px;top:347.4px;width:11px;height:1px;background:#9a9a9a;"></div><div class="a" style="left:600px;top:350.0px;width:11px;height:1px;background:#9a9a9a;"></div><div class="a" style="left:600px;top:352.6px;width:11px;height:1px;background:#9a9a9a;"></div><div class="a" style="left:600px;top:355.2px;width:11px;height:1px;background:#9a9a9a;"></div><div class="a" style="left:600px;top:357.8px;width:11px;height:1px;background:#9a9a9a;"></div><div class="a" style="left:600px;top:360.4px;width:11px;height:1px;background:#9a9a9a;"></div><div class="a" style="left:600px;top:363.0px;width:11px;height:1px;background:#9a9a9a;"></div><div class="a" style="left:600px;top:365.6px;width:11px;height:1px;background:#9a9a9a;"></div><div class="a" style="left:600px;top:368.2px;width:11px;height:1px;background:#9a9a9a;"></div><div class="a" style="left:600px;top:370.8px;width:11px;height:1px;background:#9a9a9a;"></div><div class="a" style="left:614px;top:336px;width:1px;height:35px;background:#ccc;"></div><div class="a" style="left:631px;top:336px;width:1px;height:35px;background:#ddd;"></div><div class="a" style="left:616px;top:344px;width:12px;height:1px;background:#8ea8d0;"></div><div class="a" style="left:616px;top:347px;width:12px;height:1px;background:#8ea8d0;"></div><div class="a" style="left:616px;top:350px;width:12px;height:1px;background:#8ea8d0;"></div><div class="a" style="left:616px;top:353px;width:12px;height:1px;background:#8ea8d0;"></div><div class="a" style="left:616px;top:356px;width:12px;height:1px;background:#8ea8d0;"></div><div class="a" style="left:616px;top:359px;width:12px;height:1px;background:#8ea8d0;"></div><div class="a" style="left:616px;top:362px;width:12px;height:1px;background:#8ea8d0;"></div><div class="a" style="left:616px;top:365px;width:12px;height:1px;background:#8ea8d0;"></div><div class="a" style="left:598px;top:372px;width:60px;height:5px;background:#e6e6e6;"></div><div class="a" style="left:631px;top:375px;width:9px;height:2px;background:#3a90e0;"></div><div class="a" style="left:599px;top:375px;width:8px;height:1px;background:#7a9ed0;"></div>
<div class="a" style="left:701px;top:310px;width:132px;height:79px;background:#2b2b2b;"></div><div class="a" style="left:812px;top:313px;width:8px;height:4px;background:#2b2b2b;border:1px solid #888;border-radius:1px"></div><div class="a" style="left:821px;top:313px;width:11px;height:4px;background:#2b2b2b;border:1px solid #888;border-radius:1px"></div><div class="a" style="left:717px;top:319px;width:102px;height:68px;background:#fff;box-shadow:1px 1px 0 #888"></div><div class="a" style="left:719px;top:320px;width:6px;height:3px;background:#fff;border:1px solid #ddd"></div><div class="a" style="left:813px;top:321px;width:4px;height:3px;background:#3a6ac8;"></div><div class="a" style="left:719px;top:325px;width:28px;height:1px;background:#888;"></div><div class="a" style="left:718px;top:329px;width:100px;height:1px;background:#aaa;"></div><div class="a" style="left:730px;top:324px;width:9px;height:3px;background:#1a4a95;"></div><div class="a" style="left:754px;top:329px;width:8px;height:3px;background:#1a4a95;"></div><div class="a" style="left:804px;top:377px;width:12px;height:8px;background:#0a3a85;"></div>
<div class="a" style="left:851px;top:310px;width:132px;height:80px;background:#fff;border-radius:3px"></div><div class="a" style="left:851px;top:310px;width:23px;height:80px;background:#f7f8fa;"></div><div class="a" style="left:874px;top:310px;width:109px;height:5px;background:#fbfbfb;"></div><div class="a" style="left:854px;top:312px;width:16px;height:2px;background:#f4b450;"></div><div class="a" style="left:853px;top:318.0px;width:14px;height:1px;background:#a9c3dc;"></div><div class="a" style="left:853px;top:322.2px;width:14px;height:1px;background:#a9c3dc;"></div><div class="a" style="left:853px;top:326.4px;width:14px;height:1px;background:#a9c3dc;"></div><div class="a" style="left:853px;top:330.6px;width:14px;height:1px;background:#a9c3dc;"></div><div class="a" style="left:853px;top:334.8px;width:14px;height:1px;background:#a9c3dc;"></div><div class="a" style="left:853px;top:339.0px;width:14px;height:1px;background:#a9c3dc;"></div><div class="a" style="left:853px;top:343.2px;width:14px;height:1px;background:#a9c3dc;"></div><div class="a" style="left:853px;top:347.4px;width:14px;height:1px;background:#a9c3dc;"></div><div class="a" style="left:853px;top:351.6px;width:14px;height:1px;background:#a9c3dc;"></div><div class="a" style="left:853px;top:355.8px;width:14px;height:1px;background:#a9c3dc;"></div><div class="a" style="left:853px;top:360.0px;width:14px;height:1px;background:#a9c3dc;"></div><div class="a" style="left:853px;top:364.2px;width:14px;height:1px;background:#a9c3dc;"></div><div class="a" style="left:877px;top:319px;width:33px;height:3px;background:#777;background:repeating-linear-gradient(90deg,#7a7a7a 0 2px,#d8d8d8 2px 3px,#999 3px 4px)"></div><div class="a" style="left:876px;top:324px;width:55px;height:9px;background:#d6e9f7;"></div><div class="a" style="left:877px;top:327.5px;width:8px;height:2.2px;background:#3d7ab8;transform:rotate(-45deg);border-radius:1px"></div><div class="a" style="left:893px;top:326px;width:8px;height:3px;background:#a8c8e4;"></div><div class="a" style="left:897px;top:330px;width:4px;height:1px;background:#a8c8e4;"></div><div class="a" style="left:955px;top:324px;width:26px;height:9px;background:#dcefd6;"></div><div class="a" style="left:957px;top:326px;width:1px;height:6px;background:#5a9a50;"></div><div class="a" style="left:959px;top:328px;width:1px;height:4px;background:#5a9a50;"></div><div class="a" style="left:961px;top:327px;width:1px;height:5px;background:#5a9a50;"></div><div class="a" style="left:957px;top:331px;width:7px;height:1px;background:#5a9a50;"></div><div class="a" style="left:968px;top:326px;width:11px;height:3px;background:#a8d0a0;"></div><div class="a" style="left:974px;top:330px;width:5px;height:1px;background:#a8d0a0;"></div><div class="a" style="left:876px;top:339px;width:55px;height:3px;background:#d9ebf7;"></div><div class="a" style="left:955px;top:339px;width:26px;height:3px;background:#f5d6d6;"></div><div class="a" style="left:879px;top:344px;width:48px;height:1px;background:#d6d6d6;"></div><div class="a" style="left:879px;top:350px;width:48px;height:1px;background:#d6d6d6;"></div><div class="a" style="left:879px;top:356px;width:48px;height:1px;background:#d6d6d6;"></div><div class="a" style="left:879px;top:362px;width:48px;height:1px;background:#d6d6d6;"></div><div class="a" style="left:879px;top:368px;width:48px;height:1px;background:#d6d6d6;"></div><div class="a" style="left:879px;top:374px;width:48px;height:1px;background:#d6d6d6;"></div><div class="a" style="left:956px;top:343px;width:22px;height:1px;background:#dcdcdc;"></div><div class="a" style="left:956px;top:347px;width:22px;height:1px;background:#dcdcdc;"></div><div class="a" style="left:956px;top:351px;width:22px;height:1px;background:#dcdcdc;"></div><div class="a" style="left:953px;top:376px;width:26px;height:4px;background:#fff;border:1px solid #e0e0e0"></div><div class="a" style="left:879px;top:388px;width:44px;height:1px;background:#a0b8d8;"></div><div class="a" style="left:897px;top:323px;width:62px;height:55px;background:#fff;border:1px solid #cfcfcf;border-top:2px solid #d8d8d8;box-shadow:0 2px 2px rgba(0,0,0,.35)"></div><div class="a" style="left:898px;top:325px;width:60px;height:52px;background:#ededed;"></div><div class="a" style="left:919px;top:327px;width:20px;height:1px;background:#3a6ac8;"></div><div class="a" style="left:919px;top:330px;width:20px;height:1px;background:#ddd;"></div><div class="a" style="left:898px;top:334px;width:60px;height:1px;background:#d8d8d8;"></div><div class="a" style="left:914px;top:336px;width:44px;height:35px;background:#fff;"></div><div class="a" style="left:900px;top:337.0px;width:11px;height:1px;background:#9a9a9a;"></div><div class="a" style="left:900px;top:339.6px;width:11px;height:1px;background:#9a9a9a;"></div><div class="a" style="left:900px;top:342.2px;width:11px;height:1px;background:#9a9a9a;"></div><div class="a" style="left:900px;top:344.8px;width:11px;height:1px;background:#9a9a9a;"></div><div class="a" style="left:900px;top:347.4px;width:11px;height:1px;background:#9a9a9a;"></div><div class="a" style="left:900px;top:350.0px;width:11px;height:1px;background:#9a9a9a;"></div><div class="a" style="left:900px;top:352.6px;width:11px;height:1px;background:#9a9a9a;"></div><div class="a" style="left:900px;top:355.2px;width:11px;height:1px;background:#9a9a9a;"></div><div class="a" style="left:900px;top:357.8px;width:11px;height:1px;background:#9a9a9a;"></div><div class="a" style="left:900px;top:360.4px;width:11px;height:1px;background:#9a9a9a;"></div><div class="a" style="left:900px;top:363.0px;width:11px;height:1px;background:#9a9a9a;"></div><div class="a" style="left:900px;top:365.6px;width:11px;height:1px;background:#9a9a9a;"></div><div class="a" style="left:900px;top:368.2px;width:11px;height:1px;background:#9a9a9a;"></div><div class="a" style="left:900px;top:370.8px;width:11px;height:1px;background:#9a9a9a;"></div><div class="a" style="left:914px;top:336px;width:1px;height:35px;background:#ccc;"></div><div class="a" style="left:931px;top:336px;width:1px;height:35px;background:#ddd;"></div><div class="a" style="left:916px;top:344px;width:12px;height:1px;background:#8ea8d0;"></div><div class="a" style="left:916px;top:347px;width:12px;height:1px;background:#8ea8d0;"></div><div class="a" style="left:916px;top:350px;width:12px;height:1px;background:#8ea8d0;"></div><div class="a" style="left:916px;top:353px;width:12px;height:1px;background:#8ea8d0;"></div><div class="a" style="left:916px;top:356px;width:12px;height:1px;background:#8ea8d0;"></div><div class="a" style="left:916px;top:359px;width:12px;height:1px;background:#8ea8d0;"></div><div class="a" style="left:916px;top:362px;width:12px;height:1px;background:#8ea8d0;"></div><div class="a" style="left:916px;top:365px;width:12px;height:1px;background:#8ea8d0;"></div><div class="a" style="left:898px;top:372px;width:60px;height:5px;background:#e6e6e6;"></div><div class="a" style="left:931px;top:375px;width:9px;height:2px;background:#3a90e0;"></div><div class="a" style="left:899px;top:375px;width:8px;height:1px;background:#7a9ed0;"></div>
<div class="a" style="left:1001px;top:310px;width:132px;height:79px;background:#2b2b2b;"></div><div class="a" style="left:1112px;top:313px;width:8px;height:4px;background:#2b2b2b;border:1px solid #888;border-radius:1px"></div><div class="a" style="left:1121px;top:313px;width:11px;height:4px;background:#2b2b2b;border:1px solid #888;border-radius:1px"></div><div class="a" style="left:1017px;top:319px;width:102px;height:68px;background:#fff;box-shadow:1px 1px 0 #888"></div><div class="a" style="left:1019px;top:320px;width:6px;height:3px;background:#fff;border:1px solid #ddd"></div><div class="a" style="left:1113px;top:321px;width:4px;height:3px;background:#3a6ac8;"></div><div class="a" style="left:1019px;top:325px;width:28px;height:1px;background:#888;"></div><div class="a" style="left:1018px;top:329px;width:100px;height:1px;background:#aaa;"></div><div class="a" style="left:1018px;top:334.0px;width:34px;height:3px;background:#0a3a85;"></div><div class="a" style="left:1018px;top:339.2px;width:34px;height:3px;background:#0a3a85;"></div><div class="a" style="left:1018px;top:344.4px;width:34px;height:3px;background:#0a3a85;"></div><div class="a" style="left:1018px;top:349.6px;width:34px;height:3px;background:#0a3a85;"></div><div class="a" style="left:1105px;top:377px;width:12px;height:8px;background:#0a3a85;"></div>
<div class="a" style="left:251px;top:404px;width:132px;height:80px;background:#fff;border-radius:3px"></div><div class="a" style="left:251px;top:404px;width:23px;height:80px;background:#f7f8fa;"></div><div class="a" style="left:274px;top:404px;width:109px;height:5px;background:#fbfbfb;"></div><div class="a" style="left:254px;top:406px;width:16px;height:2px;background:#f4b450;"></div><div class="a" style="left:253px;top:412.0px;width:14px;height:1px;background:#a9c3dc;"></div><div class="a" style="left:253px;top:416.2px;width:14px;height:1px;background:#a9c3dc;"></div><div class="a" style="left:253px;top:420.4px;width:14px;height:1px;background:#a9c3dc;"></div><div class="a" style="left:253px;top:424.6px;width:14px;height:1px;background:#a9c3dc;"></div><div class="a" style="left:253px;top:428.8px;width:14px;height:1px;background:#a9c3dc;"></div><div class="a" style="left:253px;top:433.0px;width:14px;height:1px;background:#a9c3dc;"></div><div class="a" style="left:253px;top:437.2px;width:14px;height:1px;background:#a9c3dc;"></div><div class="a" style="left:253px;top:441.4px;width:14px;height:1px;background:#a9c3dc;"></div><div class="a" style="left:253px;top:445.6px;width:14px;height:1px;background:#a9c3dc;"></div><div class="a" style="left:253px;top:449.8px;width:14px;height:1px;background:#a9c3dc;"></div><div class="a" style="left:253px;top:454.0px;width:14px;height:1px;background:#a9c3dc;"></div><div class="a" style="left:253px;top:458.2px;width:14px;height:1px;background:#a9c3dc;"></div><div class="a" style="left:277px;top:413px;width:33px;height:3px;background:#777;background:repeating-linear-gradient(90deg,#7a7a7a 0 2px,#d8d8d8 2px 3px,#999 3px 4px)"></div><div class="a" style="left:276px;top:418px;width:55px;height:9px;background:#d6e9f7;"></div><div class="a" style="left:277px;top:421.5px;width:8px;height:2.2px;background:#3d7ab8;transform:rotate(-45deg);border-radius:1px"></div><div class="a" style="left:293px;top:420px;width:8px;height:3px;background:#a8c8e4;"></div><div class="a" style="left:297px;top:424px;width:4px;height:1px;background:#a8c8e4;"></div><div class="a" style="left:355px;top:418px;width:26px;height:9px;background:#dcefd6;"></div><div class="a" style="left:357px;top:420px;width:1px;height:6px;background:#5a9a50;"></div><div class="a" style="left:359px;top:422px;width:1px;height:4px;background:#5a9a50;"></div><div class="a" style="left:361px;top:421px;width:1px;height:5px;background:#5a9a50;"></div><div class="a" style="left:357px;top:425px;width:7px;height:1px;background:#5a9a50;"></div><div class="a" style="left:368px;top:420px;width:11px;height:3px;background:#a8d0a0;"></div><div class="a" style="left:374px;top:424px;width:5px;height:1px;background:#a8d0a0;"></div><div class="a" style="left:276px;top:433px;width:55px;height:3px;background:#d9ebf7;"></div><div class="a" style="left:355px;top:433px;width:26px;height:3px;background:#f5d6d6;"></div><div class="a" style="left:279px;top:438px;width:48px;height:1px;background:#d6d6d6;"></div><div class="a" style="left:279px;top:444px;width:48px;height:1px;background:#d6d6d6;"></div><div class="a" style="left:279px;top:450px;width:48px;height:1px;background:#d6d6d6;"></div><div class="a" style="left:279px;top:456px;width:48px;height:1px;background:#d6d6d6;"></div><div class="a" style="left:279px;top:462px;width:48px;height:1px;background:#d6d6d6;"></div><div class="a" style="left:279px;top:468px;width:48px;height:1px;background:#d6d6d6;"></div><div class="a" style="left:356px;top:437px;width:22px;height:1px;background:#dcdcdc;"></div><div class="a" style="left:356px;top:441px;width:22px;height:1px;background:#dcdcdc;"></div><div class="a" style="left:356px;top:445px;width:22px;height:1px;background:#dcdcdc;"></div><div class="a" style="left:353px;top:470px;width:26px;height:4px;background:#fff;border:1px solid #e0e0e0"></div><div class="a" style="left:279px;top:482px;width:44px;height:1px;background:#a0b8d8;"></div><div class="a" style="left:301px;top:417px;width:54px;height:40px;background:#fff;border:1px solid #cfcfcf;border-top:2px solid #d8d8d8;box-shadow:0 2px 2px rgba(0,0,0,.35)"></div><div class="a" style="left:303px;top:420.0px;width:12px;height:1px;background:#888;"></div><div class="a" style="left:303px;top:422.5px;width:12px;height:1px;background:#888;"></div><div class="a" style="left:303px;top:425.0px;width:12px;height:1px;background:#888;"></div><div class="a" style="left:303px;top:427.5px;width:12px;height:1px;background:#888;"></div><div class="a" style="left:303px;top:430.0px;width:12px;height:1px;background:#888;"></div><div class="a" style="left:303px;top:432.5px;width:12px;height:1px;background:#888;"></div>
<div class="a" style="left:401px;top:404px;width:132px;height:79px;background:#2b2b2b;"></div><div class="a" style="left:512px;top:407px;width:8px;height:4px;background:#2b2b2b;border:1px solid #888;border-radius:1px"></div><div class="a" style="left:521px;top:407px;width:11px;height:4px;background:#2b2b2b;border:1px solid #888;border-radius:1px"></div><div class="a" style="left:417px;top:413px;width:102px;height:68px;background:#fff;box-shadow:1px 1px 0 #888"></div><div class="a" style="left:419px;top:414px;width:6px;height:3px;background:#fff;border:1px solid #ddd"></div><div class="a" style="left:513px;top:415px;width:4px;height:3px;background:#3a6ac8;"></div><div class="a" style="left:419px;top:419px;width:28px;height:1px;background:#888;"></div><div class="a" style="left:418px;top:423px;width:100px;height:1px;background:#aaa;"></div><div class="a" style="left:418px;top:429px;width:17px;height:3px;background:#0a3a85;"></div><div class="a" style="left:438px;top:429px;width:17px;height:3px;background:#0a3a85;"></div><div class="a" style="left:418px;top:435px;width:17px;height:3px;background:#0a3a85;"></div><div class="a" style="left:418px;top:441px;width:17px;height:3px;background:#0a3a85;"></div><div class="a" style="left:438px;top:434px;width:17px;height:4px;background:#fff;border:1px solid #ddd"></div><div class="a" style="left:438px;top:440px;width:17px;height:4px;background:#fff;border:1px solid #ddd"></div><div class="a" style="left:504px;top:471px;width:12px;height:8px;background:#0a3a85;"></div>
<!-- viewer -->
<div class="a" style="left:1284px;top:84px;width:627px;height:373px;background:#fff;overflow:hidden"><div class="a" style="left:0px;top:0px;width:627px;height:30px;background:#f8f8f8;border-bottom:1px solid #ececec"></div><div class="a" style="left:7px;top:10px;width:25px;height:1.6px;background:#333;"></div><div class="a" style="left:7px;top:16px;width:25px;height:1.6px;background:#333;"></div><div class="a" style="left:7px;top:23px;width:25px;height:1.6px;background:#333;"></div><svg class="a" style="left:548px;top:10px" width="8" height="10" viewBox="0 0 8 10"><circle cx="4" cy="2.6" r="2.1" fill="#666"/><path d="M0.6 9.5 C0.6 6 1.8 5.2 4 5.2 C6.2 5.2 7.4 6 7.4 9.5 Z" fill="#666"/></svg><div class="t" style="left:559px;top:11px;font-size:8.3px;font-weight:bold;color:#585858;-webkit-text-stroke:0.25px #585858">たつのたろう</div><svg class="a" style="left:610px;top:14px" width="6" height="4" viewBox="0 0 6 4"><path d="M0.5 0.5 H5.5 L3 3.5 Z" fill="#666"/></svg><div class="a" style="left:16px;top:57px;width:96px;height:21px;background:transparent;border:1.5px solid #5bc0de;border-radius:5px"></div><div class="a" style="left:20px;top:65px;width:12px;height:8px;background:#5bc0de;border-radius:1px"></div><div class="a" style="left:20px;top:63px;width:5px;height:3px;background:#5bc0de;border-radius:1px 1px 0 0"></div><div class="t" style="left:34px;top:61.5px;font-size:12px;color:#5bc0de">ドキュメント</div><div class="t" style="left:117px;top:62px;font-size:13px;color:#333">/</div><div class="a" style="left:30px;top:100px;width:176px;height:137px;background:#fff;border:1px solid #e3e3e3;border-radius:3px"></div><div class="a" style="left:38px;top:109px;width:159px;height:13px;background:#bdbdbd;border-radius:2px"></div><div class="t" style="left:38px;top:111.5px;width:159px;text-align:center;font-size:8px;font-weight:bold;color:#fff">未解答</div><div class="a" style="left:38px;top:138px;width:18px;height:12px;background:#ffd066;border-radius:2px"></div><div class="a" style="left:38px;top:135px;width:8px;height:5px;background:#ffd066;border-radius:2px 2px 0 0"></div><div class="t" style="left:61px;top:136px;font-size:15px;color:#333">小学三年生</div><div class="a" style="left:37px;top:208px;width:34px;height:21px;background:#fff;border:1px solid #63b6d6;border-radius:2px"></div><div class="t" style="left:37px;top:214px;width:34px;text-align:center;font-size:9.5px;color:#5aa9cc">見る</div><div class="a" style="left:225px;top:100px;width:176px;height:137px;background:#fff;border:1px solid #e3e3e3;border-radius:3px"></div><div class="a" style="left:233px;top:109px;width:159px;height:13px;background:#bdbdbd;border-radius:2px"></div><div class="t" style="left:233px;top:111.5px;width:159px;text-align:center;font-size:8px;font-weight:bold;color:#fff">未解答</div><div class="a" style="left:233px;top:138px;width:18px;height:12px;background:#ffd066;border-radius:2px"></div><div class="a" style="left:233px;top:135px;width:8px;height:5px;background:#ffd066;border-radius:2px 2px 0 0"></div><div class="t" style="left:256px;top:136px;font-size:15px;color:#333">新人研修</div><div class="a" style="left:232px;top:208px;width:34px;height:21px;background:#fff;border:1px solid #63b6d6;border-radius:2px"></div><div class="t" style="left:232px;top:214px;width:34px;text-align:center;font-size:9.5px;color:#5aa9cc">見る</div><div class="a" style="left:421px;top:100px;width:176px;height:137px;background:#fff;border:1px solid #e3e3e3;border-radius:3px"></div><div class="a" style="left:429px;top:109px;width:159px;height:13px;background:#bdbdbd;border-radius:2px"></div><div class="t" style="left:429px;top:111.5px;width:159px;text-align:center;font-size:8px;font-weight:bold;color:#fff">未解答</div><div class="a" style="left:429px;top:138px;width:18px;height:12px;background:#ffd066;border-radius:2px"></div><div class="a" style="left:429px;top:135px;width:8px;height:5px;background:#ffd066;border-radius:2px 2px 0 0"></div><div class="t" style="left:452px;top:136px;font-size:15px;color:#333">飲食店</div><div class="a" style="left:428px;top:208px;width:34px;height:21px;background:#fff;border:1px solid #63b6d6;border-radius:2px"></div><div class="t" style="left:428px;top:214px;width:34px;text-align:center;font-size:9.5px;color:#5aa9cc">見る</div><div class="a" style="left:30px;top:249px;width:176px;height:137px;background:#fff;border:1px solid #e3e3e3;border-radius:3px"></div><div class="a" style="left:38px;top:258px;width:159px;height:13px;background:#bdbdbd;border-radius:2px"></div><div class="t" style="left:38px;top:260.5px;width:159px;text-align:center;font-size:8px;font-weight:bold;color:#fff">未解答</div><div class="a" style="left:38px;top:287px;width:18px;height:12px;background:#ffd066;border-radius:2px"></div><div class="a" style="left:38px;top:284px;width:8px;height:5px;background:#ffd066;border-radius:2px 2px 0 0"></div><div class="t" style="left:61px;top:285px;font-size:15px;color:#333">確認用</div><div class="a" style="left:37px;top:357px;width:34px;height:21px;background:#fff;border:1px solid #63b6d6;border-radius:2px"></div><div class="t" style="left:37px;top:363px;width:34px;text-align:center;font-size:9.5px;color:#5aa9cc">見る</div><div class="a" style="left:225px;top:249px;width:176px;height:137px;background:#fff;border:1px solid #e3e3e3;border-radius:3px"></div><div class="a" style="left:236px;top:258px;width:23px;height:13px;background:#1a9a74;border-radius:2px"></div><div class="t" style="left:236px;top:260.5px;width:23px;text-align:center;font-size:8px;font-weight:bold;color:#fff">合格</div><svg class="a" style="left:233px;top:282px" width="18" height="20" viewBox="0 0 18 20"><path d="M1.5 1.5 H11 L16.5 7 V18.5 H1.5 Z M11 1.5 V7 H16.5" fill="none" stroke="#4a9fdc" stroke-width="1.4" stroke-linejoin="round"/></svg><div class="t" style="left:255px;top:285px;font-size:15px;color:#333">択一問題</div><div class="a" style="left:232px;top:357px;width:34px;height:21px;background:#fff;border:1px solid #63b6d6;border-radius:2px"></div><div class="t" style="left:232px;top:363px;width:34px;text-align:center;font-size:9.5px;color:#5aa9cc">見る</div><div class="a" style="left:269.5px;top:357px;width:34px;height:21px;background:#fff;border:1px solid #63b6d6;border-radius:2px"></div><div class="t" style="left:269.5px;top:363px;width:34px;text-align:center;font-size:9.5px;color:#5aa9cc">結果</div><div class="a" style="left:307.0px;top:357px;width:33px;height:21px;background:#fff;border:1px solid #63b6d6;border-radius:2px"></div><svg class="a" style="left:312.0px;top:363px" width="10" height="9" viewBox="0 0 10 9"><path d="M5 8.6 L1.2 4.8 C-0.2 3.4 0.3 0.6 2.6 0.5 C3.7 0.4 4.5 1.1 5 1.9 C5.5 1.1 6.3 0.4 7.4 0.5 C9.7 0.6 10.2 3.4 8.8 4.8 Z" fill="#4aabd8"/></svg><div class="t" style="left:324.0px;top:362.5px;font-size:10.5px;color:#5aa9cc">0</div><div class="a" style="left:421px;top:249px;width:176px;height:137px;background:#fff;border:1px solid #e3e3e3;border-radius:3px"></div><div class="a" style="left:432px;top:258px;width:29px;height:13px;background:#bdbdbd;border-radius:2px"></div><div class="t" style="left:432px;top:260.5px;width:29px;text-align:center;font-size:8px;font-weight:bold;color:#fff">未解答</div><svg class="a" style="left:429px;top:282px" width="18" height="20" viewBox="0 0 18 20"><path d="M1.5 1.5 H11 L16.5 7 V18.5 H1.5 Z M11 1.5 V7 H16.5" fill="none" stroke="#4a9fdc" stroke-width="1.4" stroke-linejoin="round"/></svg><div class="t" style="left:451px;top:285px;font-size:15px;color:#333">クイック</div><div class="a" style="left:428px;top:357px;width:34px;height:21px;background:#fff;border:1px solid #63b6d6;border-radius:2px"></div><div class="t" style="left:428px;top:363px;width:34px;text-align:center;font-size:9.5px;color:#5aa9cc">見る</div><div class="a" style="left:465.5px;top:357px;width:34px;height:21px;background:#fff;border:1px solid #63b6d6;border-radius:2px"></div><div class="t" style="left:465.5px;top:363px;width:34px;text-align:center;font-size:9.5px;color:#5aa9cc">結果</div><div class="a" style="left:503.0px;top:357px;width:33px;height:21px;background:#fff;border:1px solid #63b6d6;border-radius:2px"></div><svg class="a" style="left:508.0px;top:363px" width="10" height="9" viewBox="0 0 10 9"><path d="M5 8.6 L1.2 4.8 C-0.2 3.4 0.3 0.6 2.6 0.5 C3.7 0.4 4.5 1.1 5 1.9 C5.5 1.1 6.3 0.4 7.4 0.5 C9.7 0.6 10.2 3.4 8.8 4.8 Z" fill="#4aabd8"/></svg><div class="t" style="left:520.0px;top:362.5px;font-size:10.5px;color:#5aa9cc">0</div><svg class="a" style="left:359px;top:199px" width="9" height="13" viewBox="0 0 9 13"><path d="M1 1 L1 10.5 L3.3 8.3 L5 12 L6.5 11.3 L4.9 7.8 L8 7.8 Z" fill="#222" stroke="#fff" stroke-width="0.8"/></svg></div>

<!-- bottom -->
<div class="a" style="left:0;top:511px;width:1920px;height:1px;background:#0a0a0a"></div>
<div class="a" style="left:0;top:512px;width:1920px;height:29px;background:#2e2e2e"></div>
<div class="a" style="left:0;top:541px;width:1920px;height:1px;background:#262626"></div>
<div class="a" style="left:0;top:542px;width:1920px;height:437px;background:#313131"></div>
<div class="t" style="left:925px;top:521.5px;font-size:13.2px;letter-spacing:0.9px;color:#d4d4d4">0:00</div><div class="t" style="left:958px;top:521.5px;font-size:13px;color:#8a8a8a">/</div><div class="t" style="left:971px;top:521.5px;font-size:13.2px;letter-spacing:0.9px;color:#8e8e8e">0:00</div>
<div class="t" style="left:1865px;top:521px;font-size:11.5px;color:#8a8a8a">設定</div>

<div class="t" style="left:206px;top:753px;font-size:13.75px;color:#d2d2d2">ムービーの作成を開始するには、上のブラウザからビデオクリップや写真をドラッグ＆ドロップします。</div>
<svg class="a" style="left:81px;top:6px" width="96" height="22" viewBox="0 0 96 22"><path d="M15 5.5 L9.5 11 L15 16.5" fill="none" stroke="#d6d6d6" stroke-width="1.3"/></svg>
<svg class="a" style="left:197px;top:8px" width="26" height="20" viewBox="0 0 26 20"><rect x="1" y="1" width="14" height="13" fill="#d2d2d2"/><rect x="4.8" y="2.2" width="6.4" height="4.9" fill="#6a6a6a"/><rect x="4.8" y="8.1" width="6.4" height="4.7" fill="#6a6a6a"/><rect x="2.1" y="2.4" width="1.6" height="1.6" fill="#6a6a6a"/><rect x="2.1" y="5.4" width="1.6" height="1.6" fill="#6a6a6a"/><rect x="2.1" y="8.4" width="1.6" height="1.6" fill="#6a6a6a"/><rect x="2.1" y="11.4" width="1.6" height="1.6" fill="#6a6a6a"/><rect x="12.3" y="2.4" width="1.6" height="1.6" fill="#6a6a6a"/><rect x="12.3" y="5.4" width="1.6" height="1.6" fill="#6a6a6a"/><rect x="12.3" y="8.4" width="1.6" height="1.6" fill="#6a6a6a"/><rect x="12.3" y="11.4" width="1.6" height="1.6" fill="#6a6a6a"/><path d="M18.5 17 V8.5 L24 10.5 V12.8 L19.6 11.2 V17" fill="#d2d2d2"/><ellipse cx="17.3" cy="17" rx="2.2" ry="1.6" fill="#d2d2d2"/></svg>
<svg class="a" style="left:252px;top:8px" width="20" height="18" viewBox="0 0 20 18"><path d="M10 2 V15.5 M5.5 11 L10 15.5 L14.5 11" fill="none" stroke="#d2d2d2" stroke-width="1.1"/></svg>
<svg class="a" style="left:1864px;top:6px" width="44" height="22" viewBox="0 0 44 22"><path d="M22 4 V15 M18.8 7 L22 3.8 L25.2 7" fill="none" stroke="#d4d4d4" stroke-width="1.1"/><path d="M19.3 9.5 H17.2 V18.8 H26.8 V9.5 H24.7" fill="none" stroke="#d4d4d4" stroke-width="1.1"/></svg>
<svg class="a" style="left:246px;top:78px" width="18" height="14" viewBox="0 0 18 14"><rect x="1.5" y="1.5" width="15" height="11" fill="none" stroke="#d0d0d0" stroke-width="1.2"/><path d="M5.5 1.5 V12.5" stroke="#d0d0d0" stroke-width="1.2"/><path d="M2.6 3.7 H4.4 M2.6 5.5 H4.4 M2.6 7.3 H4.4" stroke="#d0d0d0" stroke-width="0.9"/></svg>
<svg class="a" style="left:1083px;top:77px" width="10" height="15" viewBox="0 0 10 15"><path d="M2 6 L5 3 L8 6 M2 9.5 L5 12.5 L8 9.5" fill="none" stroke="#bdbdbd" stroke-width="1.2"/></svg>
<svg class="a" style="left:1137px;top:78px" width="14" height="14" viewBox="0 0 14 14"><circle cx="6" cy="6" r="4.3" fill="none" stroke="#8c8c8c" stroke-width="1.3"/><path d="M9.2 9.2 L12.5 12.5" stroke="#8c8c8c" stroke-width="1.4"/></svg>
<svg class="a" style="left:1244px;top:76px" width="20" height="20" viewBox="0 0 20 20"><rect x="9.4" y="0.8" width="1.2" height="2.6" fill="#cfcfcf" transform="rotate(0.0 10 10)"/><rect x="9.4" y="0.8" width="1.2" height="2.6" fill="#cfcfcf" transform="rotate(20.0 10 10)"/><rect x="9.4" y="0.8" width="1.2" height="2.6" fill="#cfcfcf" transform="rotate(40.0 10 10)"/><rect x="9.4" y="0.8" width="1.2" height="2.6" fill="#cfcfcf" transform="rotate(60.0 10 10)"/><rect x="9.4" y="0.8" width="1.2" height="2.6" fill="#cfcfcf" transform="rotate(80.0 10 10)"/><rect x="9.4" y="0.8" width="1.2" height="2.6" fill="#cfcfcf" transform="rotate(100.0 10 10)"/><rect x="9.4" y="0.8" width="1.2" height="2.6" fill="#cfcfcf" transform="rotate(120.0 10 10)"/><rect x="9.4" y="0.8" width="1.2" height="2.6" fill="#cfcfcf" transform="rotate(140.0 10 10)"/><rect x="9.4" y="0.8" width="1.2" height="2.6" fill="#cfcfcf" transform="rotate(160.0 10 10)"/><rect x="9.4" y="0.8" width="1.2" height="2.6" fill="#cfcfcf" transform="rotate(180.0 10 10)"/><rect x="9.4" y="0.8" width="1.2" height="2.6" fill="#cfcfcf" transform="rotate(200.0 10 10)"/><rect x="9.4" y="0.8" width="1.2" height="2.6" fill="#cfcfcf" transform="rotate(220.0 10 10)"/><rect x="9.4" y="0.8" width="1.2" height="2.6" fill="#cfcfcf" transform="rotate(240.0 10 10)"/><rect x="9.4" y="0.8" width="1.2" height="2.6" fill="#cfcfcf" transform="rotate(260.0 10 10)"/><rect x="9.4" y="0.8" width="1.2" height="2.6" fill="#cfcfcf" transform="rotate(280.0 10 10)"/><rect x="9.4" y="0.8" width="1.2" height="2.6" fill="#cfcfcf" transform="rotate(300.0 10 10)"/><rect x="9.4" y="0.8" width="1.2" height="2.6" fill="#cfcfcf" transform="rotate(320.0 10 10)"/><rect x="9.4" y="0.8" width="1.2" height="2.6" fill="#cfcfcf" transform="rotate(340.0 10 10)"/><circle cx="10" cy="10" r="7" fill="none" stroke="#cfcfcf" stroke-width="1.1"/><path d="M10 10 L10 3 M10 10 L16.1 13.5 M10 10 L3.9 13.5" stroke="#cfcfcf" stroke-width="1" transform="rotate(15 10 10)"/></svg>
<svg class="a" style="left:1290px;top:40px" width="22" height="22" viewBox="0 0 22 22"><path d="M8.3 8 L19 19" stroke="#cfcfcf" stroke-width="2.8" stroke-linecap="round"/><path d="M10.5 10.2 L18.2 17.9" stroke="#1e1e1e" stroke-width="0.7" stroke-dasharray="0.8 0.8"/><path d="M8.5 1.8 V4 M8.5 12.2 V14.4 M2 8.4 H4.4 M12.6 8.4 H15 M3.9 3.9 L4.9 4.9 M13.1 3.9 L12.1 4.9 M3.9 12.9 L4.9 11.9" stroke="#cfcfcf" stroke-width="1.2"/></svg>
<svg class="a" style="left:1448px;top:43px" width="20" height="20" viewBox="0 0 20 20"><circle cx="9.5" cy="9.5" r="8.3" fill="none" stroke="#cfcfcf" stroke-width="1.2"/><path d="M15.4 3.6 A8.3 8.3 0 0 1 3.6 15.4 Z" fill="#cfcfcf"/></svg>
<svg class="a" style="left:1482px;top:44px" width="22" height="19" viewBox="0 0 22 19"><path d="M11 1.2 C4.5 1.2 1 5 1 9 C1 14 5 17.5 10.5 17.5 C13.5 17.5 14.5 16.5 13.8 14.5 C13.2 12.8 14.5 11.8 16.3 12.3 C19.5 13 21 11 20.6 8.5 C19.9 4 16 1.2 11 1.2 Z" fill="#cfcfcf"/><circle cx="7.2" cy="5" r="1.3" fill="#1e1e1e"/><circle cx="11.2" cy="3.9" r="1.3" fill="#1e1e1e"/><circle cx="15" cy="5.4" r="1.3" fill="#1e1e1e"/><circle cx="4.5" cy="8.8" r="1.3" fill="#1e1e1e"/><circle cx="6.6" cy="12.4" r="1.3" fill="#1e1e1e"/><circle cx="10.6" cy="14.2" r="1.3" fill="#1e1e1e"/></svg>
<svg class="a" style="left:1518px;top:43px" width="22" height="20" viewBox="0 0 22 20"><path d="M0.8 5.5 H3 M4.5 1 V14.5 H15.5 M4.5 5.5 H15.5 V19.5 M17 14.5 H19.8" fill="none" stroke="#cfcfcf" stroke-width="1.2"/></svg>
<svg class="a" style="left:1555px;top:43px" width="17" height="20" viewBox="0 0 17 20"><rect x="1" y="6" width="10.5" height="8.5" rx="1.3" fill="#888"/><path d="M11 10.2 L15.8 6.3 V14.2 Z" fill="#888"/><path d="M2.5 1.5 H10 M3.2 3.5 H9.3 M3.2 16.8 H9.3 M2.5 18.8 H10" stroke="#888" stroke-width="1"/></svg>
<svg class="a" style="left:1588px;top:44px" width="19" height="18" viewBox="0 0 19 18"><path d="M0.5 6 H4 L9.5 1 V17 L4 12 H0.5 Z" fill="#888"/><path d="M12.2 5.2 C13.6 7.5 13.6 10.5 12.2 12.8 M15 2.8 C17.8 6.5 17.8 11.5 15 15.2" fill="none" stroke="#888" stroke-width="1.3"/></svg>
<svg class="a" style="left:1624px;top:45px" width="16" height="15" viewBox="0 0 16 15"><rect x="1.50" y="8.00" width="1" height="6.00" fill="#888"/><rect x="3.80" y="5.00" width="1" height="9.00" fill="#888"/><rect x="5.90" y="1.80" width="1" height="12.20" fill="#888"/><rect x="8.00" y="6.80" width="1" height="7.20" fill="#888"/><rect x="9.90" y="3.00" width="1" height="11.00" fill="#888"/><rect x="12.00" y="5.50" width="1" height="8.50" fill="#888"/><rect x="14.10" y="6.80" width="1" height="7.20" fill="#888"/></svg>
<svg class="a" style="left:1658px;top:43px" width="20" height="19" viewBox="0 0 20 19"><path d="M4 16.5 A8.2 8.2 0 1 1 16 16.5" fill="none" stroke="#888" stroke-width="1.3"/><path d="M9.9 10.8 L14.5 5" stroke="#888" stroke-width="1.5" stroke-linecap="round"/><circle cx="9.9" cy="10.8" r="1.3" fill="#888"/><path d="M10 1.8 V3.5 M2 10.5 H3.6 M16.4 10.5 H18 M4.4 4.6 L5.4 5.6 M15.6 4.6 L14.6 5.6" stroke="#888" stroke-width="1"/></svg>
<svg class="a" style="left:1693px;top:44px" width="20" height="18" viewBox="0 0 20 18"><circle cx="9.6" cy="5.6" r="5" fill="#8a8a8a"/><circle cx="5.3" cy="11.9" r="5" fill="#5a5a5a"/><circle cx="13.5" cy="11.6" r="5" fill="#a8a8a8"/></svg>
<svg class="a" style="left:1728px;top:43px" width="20" height="20" viewBox="0 0 20 20"><circle cx="9.5" cy="9.5" r="8.3" fill="none" stroke="#cfcfcf" stroke-width="1.2"/><circle cx="9.6" cy="5" r="1.1" fill="#e8e8e8"/><path d="M7.6 7.8 H10.7 V13.2 H11.8 V14.5 H7.4 V13.2 H8.5 V9 H7.6 Z" fill="#e8e8e8"/></svg>
<svg class="a" style="left:17px;top:106px" width="16" height="16" viewBox="0 0 16 16"><path d="M1.2 3.6 L13.6 1 L14.2 3.6 L1.8 6.2 Z" fill="#dcdcdc"/><path d="M3.6 5.8 L6.2 2.4 M7.4 5 L10 1.6 M11.2 4.2 L13.4 1.2" stroke="#1e1e1e" stroke-width="1.1"/><rect x="1.2" y="7" width="13" height="7.5" rx="1" fill="#dcdcdc"/><path d="M1.2 9 H14.2" stroke="#1e1e1e" stroke-width="0.6"/></svg>
<svg class="a" style="left:17px;top:162px" width="16" height="16" viewBox="0 0 16 16"><circle cx="11.80" cy="7.50" r="2.5" fill="#1e1e1e" stroke="#e0e0e0" stroke-width="1.1"/><circle cx="10.54" cy="10.54" r="2.5" fill="#1e1e1e" stroke="#e0e0e0" stroke-width="1.1"/><circle cx="7.50" cy="11.80" r="2.5" fill="#1e1e1e" stroke="#e0e0e0" stroke-width="1.1"/><circle cx="4.46" cy="10.54" r="2.5" fill="#1e1e1e" stroke="#e0e0e0" stroke-width="1.1"/><circle cx="3.20" cy="7.50" r="2.5" fill="#1e1e1e" stroke="#e0e0e0" stroke-width="1.1"/><circle cx="4.46" cy="4.46" r="2.5" fill="#1e1e1e" stroke="#e0e0e0" stroke-width="1.1"/><circle cx="7.50" cy="3.20" r="2.5" fill="#1e1e1e" stroke="#e0e0e0" stroke-width="1.1"/><circle cx="10.54" cy="4.46" r="2.5" fill="#1e1e1e" stroke="#e0e0e0" stroke-width="1.1"/><circle cx="7.5" cy="7.5" r="2.6" fill="#1e1e1e"/></svg>
<svg class="a" style="left:17px;top:185px" width="15" height="15" viewBox="0 0 15 15"><rect x="0.5" y="0.5" width="13.5" height="13.5" rx="1.5" fill="#dcdcdc"/><path d="M7.25 2.6 L8.5 5.9 L11.9 5.9 L9.2 8 L10.2 11.4 L7.25 9.4 L4.3 11.4 L5.3 8 L2.6 5.9 L6 5.9 Z" fill="#1e1e1e"/></svg>
<svg class="a" style="left:5px;top:212px" width="11" height="10" viewBox="0 0 11 10"><path d="M0.6 1 H10 L5.3 9 Z" fill="#b0b0b0"/></svg>
<svg class="a" style="left:1286px;top:476px" width="23" height="21" viewBox="0 0 23 21"><path d="M11 19 L2.6 10.8 C0.2 8.4 0.6 4.4 3.5 2.5 C6 1 8.9 1.7 11 4.4 C13.1 1.7 16 1 18.5 2.5 C21.4 4.4 21.8 8.4 19.4 10.8 Z" fill="none" stroke="#fff" stroke-width="1.5" stroke-linejoin="round"/></svg>
<svg class="a" style="left:1320px;top:476px" width="20" height="20" viewBox="0 0 20 20"><path d="M1.5 4.4 L4.4 1.5 L9.9 7 L15.4 1.5 L18.3 4.4 L12.8 9.9 L18.3 15.4 L15.4 18.3 L9.9 12.8 L4.4 18.3 L1.5 15.4 L7 9.9 Z" fill="none" stroke="#fff" stroke-width="1.4" stroke-linejoin="miter"/><path d="M4.4 4.4 L15.4 15.4 M15.4 4.4 L4.4 15.4" stroke="#fff" stroke-width="0.8" stroke-dasharray="0.9 0.9"/></svg>
<svg class="a" style="left:1550px;top:480px" width="16" height="14" viewBox="0 0 16 14"><rect x="1" y="1" width="2.2" height="12" fill="#c8c8c8"/><path d="M3.4 7 L14 1 V13 Z" fill="#c8c8c8"/></svg>
<svg class="a" style="left:1585px;top:476px" width="21" height="21" viewBox="0 0 21 21"><path d="M1 1 L20 10.5 L1 20 Z" fill="#c8c8c8"/></svg>
<svg class="a" style="left:1623px;top:480px" width="16" height="14" viewBox="0 0 16 14"><path d="M1 1 L11.6 7 L1 13 Z" fill="#c8c8c8"/><rect x="11.8" y="1" width="2.2" height="12" fill="#c8c8c8"/></svg>
<svg class="a" style="left:1889px;top:476px" width="21" height="21" viewBox="0 0 21 21"><path d="M4 4 L8.5 8.5 M17 17 L12.5 12.5" stroke="#cfcfcf" stroke-width="2.2"/><path d="M1.5 1.5 H8 L1.5 8 Z M19.5 19.5 H13 L19.5 13 Z" fill="#cfcfcf"/></svg>
<div class="a" style="left:1748px;top:519px;width:1px;height:3px;background:#3e3e3e"></div><div class="a" style="left:1761px;top:519px;width:1px;height:3px;background:#3e3e3e"></div><div class="a" style="left:1774px;top:519px;width:1px;height:3px;background:#3e3e3e"></div><div class="a" style="left:1787px;top:519px;width:1px;height:3px;background:#3e3e3e"></div><div class="a" style="left:1800px;top:519px;width:1px;height:3px;background:#3e3e3e"></div><div class="a" style="left:1813px;top:519px;width:1px;height:3px;background:#3e3e3e"></div><div class="a" style="left:1826px;top:519px;width:1px;height:3px;background:#3e3e3e"></div><div class="a" style="left:1743px;top:529px;width:80px;height:3px;border-radius:1.5px;background:#1c1c1c"></div>
<svg class="a" style="left:1820px;top:521px" width="14" height="15" viewBox="0 0 14 15"><path d="M1.2 13.5 V7 L7 1.2 L12.8 7 V13.5 Z" fill="#cdcdcd" stroke="#202020" stroke-width="0.8" stroke-linejoin="round"/></svg>
<svg class="a" style="left:37px;top:544px" width="11" height="9" viewBox="0 0 11 9"><path d="M0.5 0.5 H10.5 L5.5 7.5 Z" fill="#6a6a6a"/></svg>
<svg class="a" style="left:107px;top:751px" width="20" height="22" viewBox="0 0 20 22"><rect x="1.5" y="1.5" width="16.5" height="19.5" fill="none" stroke="#252525" stroke-width="1.2"/><path d="M4.5 1.5 V21 M15 1.5 V21 M4.5 10.8 H15" stroke="#252525" stroke-width="1.2"/><path d="M3 3.5 V5 M3 6.8 V8.3 M3 10.1 V11.6 M3 13.4 V14.9 M3 16.7 V18.2 M16.5 3.5 V5 M16.5 6.8 V8.3 M16.5 10.1 V11.6 M16.5 13.4 V14.9 M16.5 16.7 V18.2" stroke="#252525" stroke-width="1"/></svg>
<svg class="a" style="left:55px;top:944px" width="14" height="15" viewBox="0 0 14 15"><path d="M4 12 V2.5 L12.5 1 V10.5" fill="none" stroke="#1c1c1c" stroke-width="1.5"/><path d="M4 2.5 L12.5 1 V3.4 L4 4.9 Z" fill="#1c1c1c"/><ellipse cx="2.7" cy="12.2" rx="2.3" ry="1.7" fill="#1c1c1c"/><ellipse cx="11.2" cy="10.7" rx="2.3" ry="1.7" fill="#1c1c1c"/></svg>
<div class="a" style="left:48px;top:724px;width:138px;height:74px;border:1px dashed #242424;border-radius:4px;"></div>
<div class="a" style="left:196px;top:724px;width:138px;height:74px;border:1px dashed #242424;border-radius:4px;"></div>
<div class="a" style="left:344px;top:724px;width:138px;height:74px;border:1px dashed #242424;border-radius:4px;"></div>
<div class="a" style="left:492px;top:724px;width:138px;height:74px;border:1px dashed #242424;border-radius:4px;"></div>
<div class="a" style="left:640px;top:724px;width:138px;height:74px;border:1px dashed #242424;border-radius:4px;"></div>
<div class="a" style="left:788px;top:724px;width:138px;height:74px;border:1px dashed #242424;border-radius:4px;"></div>
<div class="a" style="left:936px;top:724px;width:138px;height:74px;border:1px dashed #242424;border-radius:4px;"></div>
<div class="a" style="left:1084px;top:724px;width:138px;height:74px;border:1px dashed #242424;border-radius:4px;"></div>
<div class="a" style="left:1232px;top:724px;width:138px;height:74px;border:1px dashed #242424;border-radius:4px;"></div>
<div class="a" style="left:1380px;top:724px;width:138px;height:74px;border:1px dashed #242424;border-radius:4px;"></div>
<div class="a" style="left:1528px;top:724px;width:138px;height:74px;border:1px dashed #242424;border-radius:4px;"></div>
<div class="a" style="left:1676px;top:724px;width:138px;height:74px;border:1px dashed #242424;border-radius:4px;"></div>
<div class="a" style="left:1824px;top:724px;width:81px;height:74px;border:1px dashed #242424;border-radius:4px;border-right:none;"></div>
<div class="a" style="left:43px;top:940px;width:1856px;height:24px;border:1px dashed #232323;border-radius:4px"></div>
<div class="a" style="left:42px;top:548px;width:1px;height:421px;background:#5e5e5e"></div>

</body></html>
